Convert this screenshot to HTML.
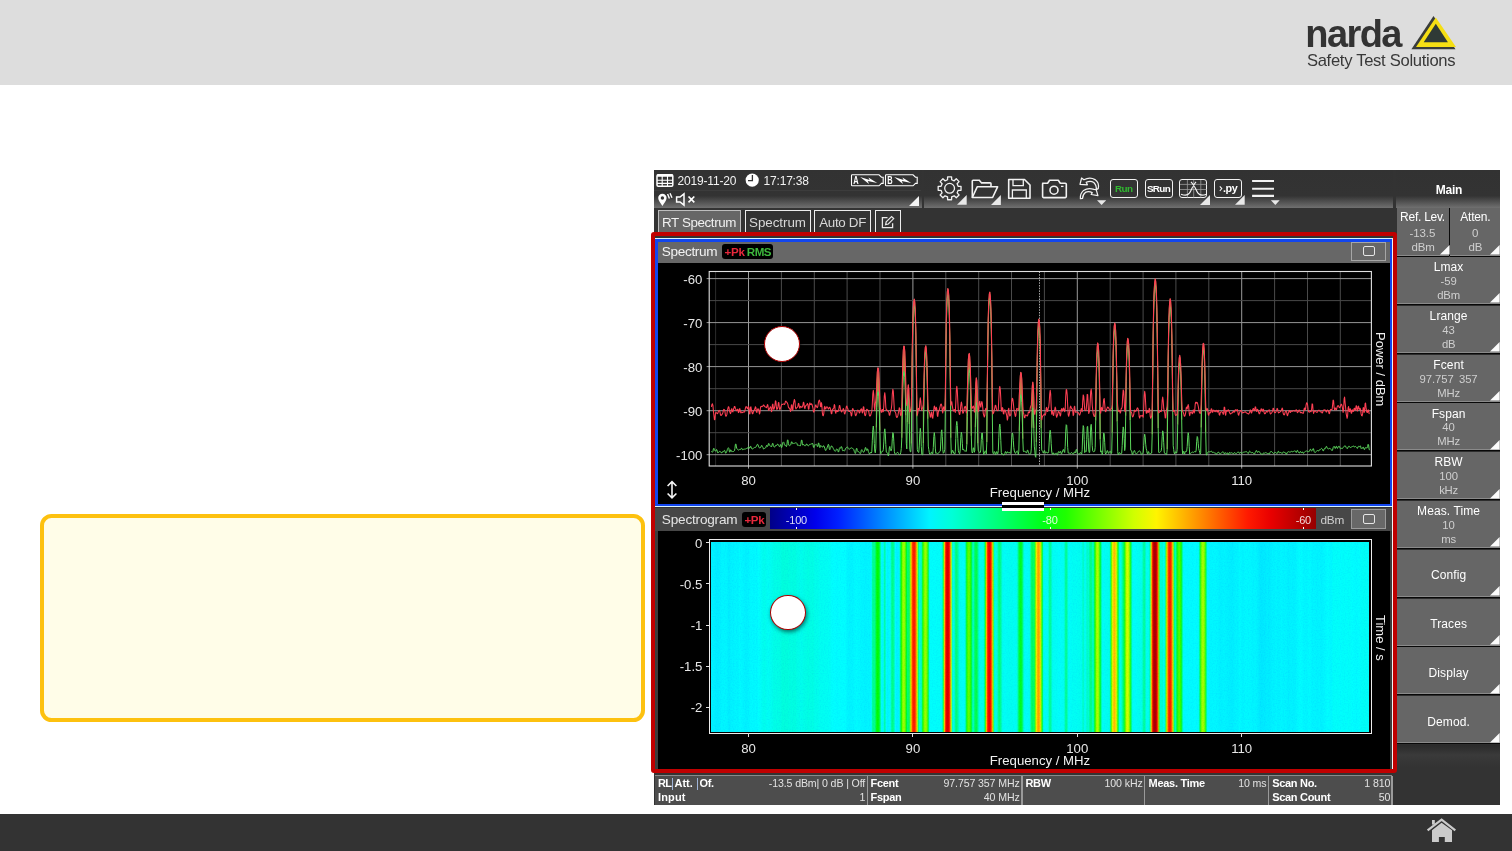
<!DOCTYPE html>
<html lang="en"><head><meta charset="utf-8"><title>Narda SignalShark - RT Spectrum</title>
<style>
html,body{margin:0;padding:0;}
body{width:1512px;height:851px;position:relative;overflow:hidden;background:#fff;font-family:"Liberation Sans", sans-serif;}
.a{position:absolute;box-sizing:border-box;}
.t{position:absolute;white-space:nowrap;font-family:"Liberation Sans", sans-serif;}
svg{position:absolute;overflow:visible;}
</style></head><body>
<div class="a" style="left:0.0px;top:0.0px;width:1512.0px;height:85.0px;background:#ddd;"></div>
<div class="a" style="left:0.0px;top:814.0px;width:1512.0px;height:37.0px;background:#333;"></div>
<div class="t" style="left:1305.3px;top:13px;font-size:38px;line-height:42px;color:#333;font-weight:700;letter-spacing:-1.6px;">narda</div>
<div class="t" style="left:1306.9px;top:51px;font-size:16.6px;line-height:19px;color:#383838;letter-spacing:-0.3px;">Safety Test Solutions</div>
<svg style="left:1408px;top:12px" width="52" height="42" viewBox="1408 12 52 42"><polygon points="1433.5,16 1455.5,49.3 1411.4,49.3" fill="#3a3d3a"/><polygon points="1435.8,17.4 1456,47 1416,47" fill="#f5df14"/><polygon points="1435.8,23.7 1447.9,42.2 1423.7,42.2" fill="#2f3a36"/></svg>
<svg style="left:1424px;top:816px" width="36" height="30" viewBox="1424 816 36 30"><path d="M1427.6 830.4 L1441.6 819.6 L1455.3 830.4" fill="none" stroke="#cbcbcb" stroke-width="2.2"/><path d="M1432 830.2 L1441.6 822.8 L1452 830.2 V842 H1444.8 V837.1 H1438.9 V842 H1432 Z" fill="#cbcbcb"/><rect x="1432" y="820" width="2.8" height="4.6" fill="#cbcbcb"/></svg>
<div class="a" style="left:39.7px;top:513.8px;width:605.4px;height:208.2px;background:#fffde8;border:4.2px solid #fdc10f;border-radius:11.5px;"></div>
<div class="a" style="left:654.0px;top:170.0px;width:846.0px;height:635.0px;background:#333;"></div>
<div class="a" style="left:654.0px;top:170.0px;width:267.7px;height:38.0px;background:linear-gradient(#323232 0,#333 68%,#707070 100%);"></div>
<div class="a" style="left:924.0px;top:170.0px;width:469.0px;height:38.0px;background:linear-gradient(#323232 0,#333 68%,#707070 100%);"></div>
<div class="a" style="left:1395.7px;top:170.0px;width:104.3px;height:38.0px;background:linear-gradient(#323232 0,#333 68%,#707070 100%);"></div>
<div class="a" style="left:654.0px;top:189.5px;width:267.0px;height:0.8px;background:#3c3c3c;"></div>
<svg style="left:655px;top:172px" width="20" height="16" viewBox="655 172 20 16"><rect x="657" y="174.7" width="15.8" height="11.6" rx="1.2" fill="none" stroke="#fff" stroke-width="1.5"/><rect x="657" y="174.2" width="15.8" height="2.6" rx="0.8" fill="#fff"/><path d="M657 180.2H673M657 183.4H673M662.2 176V186.5M667.5 176V186.5" stroke="#fff" stroke-width="1.1" fill="none"/></svg>
<div class="t" style="left:677.4px;top:174px;font-size:12px;line-height:14px;color:#f2f2f2;letter-spacing:-0.15px;">2019-11-20</div>
<svg style="left:744px;top:172px" width="16" height="16" viewBox="744 172 16 16"><circle cx="752.2" cy="180.1" r="6.6" fill="#fff"/><path d="M752.4 175V180.6H748" stroke="#333" stroke-width="1.3" fill="none"/></svg>
<div class="t" style="left:763.6px;top:174px;font-size:12px;line-height:14px;color:#f2f2f2;letter-spacing:-0.2px;">17:17:38</div>
<svg style="left:850.2px;top:173px" width="37" height="15" viewBox="850.2 173 37 15"><path d="M852.4000000000001 174.8 H879.2 L881.7 177.2 H883.4000000000001 V183.4 H881.7 L879.2 185.8 H852.4000000000001 Q851.7 185.8 851.7 185 V175.6 Q851.7 174.8 852.4000000000001 174.8Z" fill="none" stroke="#fff" stroke-width="1.1"/><path d="M860.4000000000001 177 L869.8000000000001 180 L868.6 177.4 L877.4000000000001 183 L868.0 180.9 L869.2 184 Z" fill="#fff"/><text x="853.4000000000001" y="184" font-family='"Liberation Sans", sans-serif' font-size="10" font-weight="700" fill="#fff" textLength="5.4" lengthAdjust="spacingAndGlyphs">A</text></svg>
<svg style="left:884px;top:173px" width="37" height="15" viewBox="884 173 37 15"><path d="M886.2 174.8 H913 L915.5 177.2 H917.2 V183.4 H915.5 L913 185.8 H886.2 Q885.5 185.8 885.5 185 V175.6 Q885.5 174.8 886.2 174.8Z" fill="none" stroke="#fff" stroke-width="1.1"/><path d="M894.2 177 L903.6 180 L902.4 177.4 L911.2 183 L901.8 180.9 L903 184 Z" fill="#fff"/><text x="887.2" y="184" font-family='"Liberation Sans", sans-serif' font-size="10" font-weight="700" fill="#fff" textLength="5.4" lengthAdjust="spacingAndGlyphs">B</text></svg>
<svg style="left:656px;top:192px" width="42" height="16" viewBox="656 192 42 16"><path d="M662.4 193.8 a4.2 4.2 0 0 1 4.2 4.2 c0 2.8 -2.7 5 -4.2 8 c-1.5 -3 -4.2 -5.2 -4.2 -8 a4.2 4.2 0 0 1 4.2 -4.2Z" fill="#fff"/><circle cx="662.4" cy="198" r="1.7" fill="#333"/><path d="M667.6 194 L669.4 198.4 M670 193.3 L672 197.8" stroke="#fff" stroke-width="1.4" fill="none"/><path d="M676.6 197 H680 L684 193.8 V205.2 L680 202 H676.6 Z" fill="none" stroke="#fff" stroke-width="1.5" stroke-linejoin="miter"/><path d="M688.5 196.5 L694.3 202.3 M694.3 196.5 L688.5 202.3" stroke="#fff" stroke-width="1.7" fill="none"/></svg>
<svg style="left:909.3px;top:196px" width="10" height="10" viewBox="0 0 10 10"><polygon points="10,0 10,10 0,10" fill="#f4f4f4"/></svg>
<div class="a" style="left:658.0px;top:210.4px;width:83.2px;height:25.6px;background:#666;border:1.3px solid #bdbdbd;border-bottom:none;"></div>
<div class="a" style="left:744.8px;top:210.4px;width:66.0px;height:25.6px;background:#333;border:1.3px solid #ededed;border-bottom:none;"></div>
<div class="a" style="left:814.0px;top:210.4px;width:57.2px;height:25.6px;background:#333;border:1.3px solid #ededed;border-bottom:none;"></div>
<div class="a" style="left:875.0px;top:210.4px;width:26.0px;height:25.6px;background:#333;border:1.3px solid #ededed;border-bottom:none;"></div>
<div class="t" style="left:662.0px;top:215px;font-size:13.4px;line-height:15px;color:#f0f0f0;letter-spacing:-0.4px;">RT Spectrum</div>
<div class="t" style="left:749.0px;top:215px;font-size:13.4px;line-height:15px;color:#d8d8d8;letter-spacing:-0.05px;">Spectrum</div>
<div class="t" style="left:819.2px;top:215px;font-size:13.4px;line-height:15px;color:#d8d8d8;letter-spacing:-0.33px;">Auto DF</div>
<svg style="left:880px;top:214px" width="16" height="16" viewBox="880 214 16 16"><path d="M887.5 217.6 H882.4 V227.6 H892.6 V223.2" fill="none" stroke="#e8e8e8" stroke-width="1.3"/><path d="M885.6 224.6 L886.2 221.9 L891.6 216.5 L893.7 218.6 L888.3 224 Z" fill="none" stroke="#e8e8e8" stroke-width="1.2"/></svg>
<svg style="left:934px;top:174px" width="36" height="34" viewBox="934 174 36 34"><path d="M947.61 176.87 L951.59 176.87 L951.65 179.74 L954.20 180.80 L956.27 178.81 L959.09 181.63 L957.10 183.70 L958.16 186.25 L961.03 186.31 L961.03 190.29 L958.16 190.35 L957.10 192.90 L959.09 194.97 L956.27 197.79 L954.20 195.80 L951.65 196.86 L951.59 199.73 L947.61 199.73 L947.55 196.86 L945.00 195.80 L942.93 197.79 L940.11 194.97 L942.10 192.90 L941.04 190.35 L938.17 190.29 L938.17 186.31 L941.04 186.25 L942.10 183.70 L940.11 181.63 L942.93 178.81 L945.00 180.80 L947.55 179.74Z" fill="none" stroke="#f2f2f2" stroke-width="1.3" stroke-linejoin="round"/><circle cx="949.6" cy="188.3" r="4.9" fill="none" stroke="#f2f2f2" stroke-width="1.3"/></svg>
<svg style="left:956.8px;top:195.20000000000002px" width="9.7" height="9.7" viewBox="0 0 9.7 9.7"><polygon points="9.7,0 9.7,9.7 0,9.7" fill="#e8e8e8"/></svg>
<svg style="left:969px;top:176px" width="34" height="26" viewBox="969 176 34 26"><path d="M972.3 197.5 V181 Q972.3 180.2 973.1 180.2 H979.3 L981.6 182.9 H990.2 Q991 182.9 991 183.7 V186.8" fill="none" stroke="#f2f2f2" stroke-width="1.6"/><path d="M972.3 197.5 L977.2 186.8 H997.6 L992.6 197.5 Z" fill="none" stroke="#f2f2f2" stroke-width="1.6" stroke-linejoin="round"/></svg>
<svg style="left:991.0px;top:195.0px" width="9.9" height="9.9" viewBox="0 0 9.9 9.9"><polygon points="9.9,0 9.9,9.9 0,9.9" fill="#e8e8e8"/></svg>
<svg style="left:1005px;top:176px" width="30" height="26" viewBox="1005 176 30 26"><path d="M1008.7 179.5 H1024.5 L1030 185 V198.3 H1008.7 Z" fill="none" stroke="#f2f2f2" stroke-width="1.6" stroke-linejoin="round"/><path d="M1013 179.8 V185.6 H1023.3 V179.8" fill="none" stroke="#f2f2f2" stroke-width="1.3"/><path d="M1012.4 198 V190 H1026.3 V198" fill="none" stroke="#f2f2f2" stroke-width="1.3"/></svg>
<svg style="left:1039px;top:176px" width="32" height="26" viewBox="1039 176 32 26"><path d="M1042.6 183.3 H1047.6 L1049.6 180.2 H1058.3 L1060.3 183.3 H1065.3 Q1066.3 183.3 1066.3 184.3 V196.6 Q1066.3 197.6 1065.3 197.6 H1043.6 Q1042.6 197.6 1042.6 196.6 V184.3 Q1042.6 183.3 1043.6 183.3Z" fill="none" stroke="#f2f2f2" stroke-width="1.6" stroke-linejoin="round"/><circle cx="1054" cy="190.2" r="4" fill="none" stroke="#f2f2f2" stroke-width="1.6"/><path d="M1061 186.4 H1063.5" stroke="#f2f2f2" stroke-width="1.3"/></svg>
<svg style="left:1076px;top:175px" width="32" height="32" viewBox="1076 175 32 32"><path d="M1080 184.4 L1081.6 178 L1083.9 179.7 Q1090 176.6 1095 179.6 Q1099.6 182.8 1098.2 188.6 L1096.2 189.7 Q1096.8 185.4 1093.8 182.5 Q1090.4 180.2 1086.2 182.3 L1087.4 184.8 Z" fill="none" stroke="#f2f2f2" stroke-width="1.25" stroke-linejoin="round"/><path d="M1080.4 198.7 Q1079.8 193.8 1083.6 190.4 Q1088 187.4 1094 189.4 L1096.2 189.7 L1097.9 195.6 L1091.2 194.5 L1092.2 192.6 Q1088.6 190.6 1085.4 192.4 Q1082.6 194.6 1082.6 198.3 Z" fill="none" stroke="#f2f2f2" stroke-width="1.25" stroke-linejoin="round"/><polygon points="1097,200.3 1106.2,200.3 1101.6,204.9" fill="#e8e8e8"/></svg>
<div class="a" style="left:1110.2px;top:179.1px;width:27.4px;height:19.2px;border:1.5px solid #f2f2f2;border-radius:3px;"></div>
<div class="a" style="left:1144.5px;top:179.1px;width:28.4px;height:19.2px;border:1.5px solid #f2f2f2;border-radius:3px;"></div>
<div class="a" style="left:1179.4px;top:179.1px;width:27.8px;height:19.2px;border:1.5px solid #f2f2f2;border-radius:3px;"></div>
<div class="a" style="left:1214.3px;top:179.1px;width:27.6px;height:19.2px;border:1.5px solid #f2f2f2;border-radius:3px;"></div>
<div class="t" style="left:1115.0px;top:183px;font-size:9.9px;line-height:11px;color:#30b830;font-weight:700;letter-spacing:-0.55px;">Run</div>
<div class="t" style="left:1146.9px;top:183px;font-size:9.9px;line-height:11px;color:#fff;font-weight:700;letter-spacing:-0.65px;">SRun</div>
<div class="t" style="left:1223.0px;top:182px;font-size:10.8px;line-height:12px;color:#fff;font-weight:700;letter-spacing:-0.45px;">.py</div>
<svg style="left:1217px;top:183px" width="10" height="12" viewBox="1217 183 10 12"><path d="M1219.8 186.3 L1221.8 188.6 L1219.8 191" fill="none" stroke="#f2f2f2" stroke-width="1.1"/></svg>
<svg style="left:1179px;top:179px" width="29" height="20" viewBox="1179 179 29 20"><path d="M1187.4 180V197.5M1193.7 180V197.5M1200.8 180V197.5M1180 184.4H1206.6M1180 189.5H1206.6" stroke="#9a9a9a" stroke-width="0.8" fill="none"/><path d="M1181 194.2 C1184 195.4 1187.6 195.6 1189.4 193.2 C1191.4 190.4 1192.4 186 1193.7 186 C1195 186 1196 190.4 1198 193.2 C1199.8 195.6 1203.4 195.4 1206.4 194.2" fill="none" stroke="#f2f2f2" stroke-width="1.2"/><path d="M1191 181.9 L1193.6 185 L1196 181.9" fill="none" stroke="#f2f2f2" stroke-width="1.1"/></svg>
<svg style="left:1200.1px;top:194.9px" width="10" height="10" viewBox="0 0 10 10"><polygon points="10,0 10,10 0,10" fill="#e8e8e8"/></svg>
<svg style="left:1235.0px;top:195.20000000000002px" width="9.7" height="9.7" viewBox="0 0 9.7 9.7"><polygon points="9.7,0 9.7,9.7 0,9.7" fill="#e8e8e8"/></svg>
<svg style="left:1250px;top:178px" width="32" height="28" viewBox="1250 178 32 28"><path d="M1252.1 181H1274M1252.1 188.8H1274M1252.1 195.9H1274" stroke="#f2f2f2" stroke-width="2.1"/><polygon points="1270.9,200.3 1279.7,200.3 1275.3,205" fill="#e8e8e8"/></svg>
<div class="t" style="left:1299.0px;width:300px;text-align:center;top:183px;font-size:12px;line-height:14px;color:#fff;font-weight:700;letter-spacing:-0.2px;">Main</div>
<div class="a" style="left:1396.7px;top:208.2px;width:102.9px;height:47.8px;background:#0a0a0a;"></div>
<div class="a" style="left:1396.7px;top:208.4px;width:52.3px;height:47.4px;background:#666;border-bottom:1px solid #8a8a8a;box-shadow:0 1.1px 0 #080808;"></div>
<svg style="left:1439.6000000000001px;top:245.0px" width="9.6" height="9.6" viewBox="0 0 9.6 9.6"><polygon points="9.6,0 9.6,9.6 0,9.6" fill="#fcfcfc"/></svg>
<div class="a" style="left:1450.1px;top:208.4px;width:49.5px;height:47.4px;background:#666;border-bottom:1px solid #8a8a8a;box-shadow:0 1.1px 0 #080808;"></div>
<svg style="left:1490.2px;top:245.0px" width="9.6" height="9.6" viewBox="0 0 9.6 9.6"><polygon points="9.6,0 9.6,9.6 0,9.6" fill="#fcfcfc"/></svg>
<div class="t" style="left:1272.5px;width:300px;text-align:center;top:210px;font-size:12px;line-height:14px;color:#fff;letter-spacing:-0.25px;">Ref. Lev.</div>
<div class="t" style="left:1272.4px;width:300px;text-align:center;top:227px;font-size:11.5px;line-height:12px;color:#cfcfcf;letter-spacing:-0.1px;">-13.5</div>
<div class="t" style="left:1273.2px;width:300px;text-align:center;top:241px;font-size:11.5px;line-height:12px;color:#cfcfcf;letter-spacing:-0.1px;">dBm</div>
<div class="t" style="left:1325.3px;width:300px;text-align:center;top:210px;font-size:12px;line-height:14px;color:#fff;letter-spacing:-0.25px;">Atten.</div>
<div class="t" style="left:1325.3px;width:300px;text-align:center;top:227px;font-size:11.5px;line-height:12px;color:#cfcfcf;">0</div>
<div class="t" style="left:1325.3px;width:300px;text-align:center;top:241px;font-size:11.5px;line-height:12px;color:#cfcfcf;letter-spacing:-0.2px;">dB</div>
<div class="a" style="left:1396.7px;top:257.0px;width:102.9px;height:47.1px;background:#666;border-bottom:1px solid #8a8a8a;box-shadow:0 1.1px 0 #080808;"></div>
<svg style="left:1490.2px;top:293.29999999999995px" width="9.6" height="9.6" viewBox="0 0 9.6 9.6"><polygon points="9.6,0 9.6,9.6 0,9.6" fill="#fcfcfc"/></svg>
<div class="t" style="left:1298.6px;width:300px;text-align:center;top:260px;font-size:12px;line-height:14px;color:#fff;letter-spacing:0.1px;">Lmax</div>
<div class="t" style="left:1298.6px;width:300px;text-align:center;top:275px;font-size:11.3px;line-height:12px;color:#cfcfcf;letter-spacing:-0.05px;word-spacing:2px;">-59</div>
<div class="t" style="left:1298.6px;width:300px;text-align:center;top:289px;font-size:11.3px;line-height:12px;color:#cfcfcf;letter-spacing:-0.2px;">dBm</div>
<div class="a" style="left:1396.7px;top:305.8px;width:102.9px;height:47.1px;background:#666;border-bottom:1px solid #8a8a8a;box-shadow:0 1.1px 0 #080808;"></div>
<svg style="left:1490.2px;top:342.09999999999997px" width="9.6" height="9.6" viewBox="0 0 9.6 9.6"><polygon points="9.6,0 9.6,9.6 0,9.6" fill="#fcfcfc"/></svg>
<div class="t" style="left:1298.6px;width:300px;text-align:center;top:309px;font-size:12px;line-height:14px;color:#fff;letter-spacing:0.1px;">Lrange</div>
<div class="t" style="left:1298.6px;width:300px;text-align:center;top:324px;font-size:11.3px;line-height:12px;color:#cfcfcf;letter-spacing:-0.05px;word-spacing:2px;">43</div>
<div class="t" style="left:1298.6px;width:300px;text-align:center;top:338px;font-size:11.3px;line-height:12px;color:#cfcfcf;letter-spacing:-0.2px;">dB</div>
<div class="a" style="left:1396.7px;top:354.6px;width:102.9px;height:47.1px;background:#666;border-bottom:1px solid #8a8a8a;box-shadow:0 1.1px 0 #080808;"></div>
<svg style="left:1490.2px;top:390.9px" width="9.6" height="9.6" viewBox="0 0 9.6 9.6"><polygon points="9.6,0 9.6,9.6 0,9.6" fill="#fcfcfc"/></svg>
<div class="t" style="left:1298.6px;width:300px;text-align:center;top:358px;font-size:12px;line-height:14px;color:#fff;letter-spacing:0.1px;">Fcent</div>
<div class="t" style="left:1298.6px;width:300px;text-align:center;top:373px;font-size:11.3px;line-height:12px;color:#cfcfcf;letter-spacing:-0.05px;word-spacing:2px;">97.757 357</div>
<div class="t" style="left:1298.6px;width:300px;text-align:center;top:387px;font-size:11.3px;line-height:12px;color:#cfcfcf;letter-spacing:-0.2px;">MHz</div>
<div class="a" style="left:1396.7px;top:403.4px;width:102.9px;height:47.1px;background:#666;border-bottom:1px solid #8a8a8a;box-shadow:0 1.1px 0 #080808;"></div>
<svg style="left:1490.2px;top:439.7px" width="9.6" height="9.6" viewBox="0 0 9.6 9.6"><polygon points="9.6,0 9.6,9.6 0,9.6" fill="#fcfcfc"/></svg>
<div class="t" style="left:1298.6px;width:300px;text-align:center;top:407px;font-size:12px;line-height:14px;color:#fff;letter-spacing:0.1px;">Fspan</div>
<div class="t" style="left:1298.6px;width:300px;text-align:center;top:421px;font-size:11.3px;line-height:12px;color:#cfcfcf;letter-spacing:-0.05px;word-spacing:2px;">40</div>
<div class="t" style="left:1298.6px;width:300px;text-align:center;top:435px;font-size:11.3px;line-height:12px;color:#cfcfcf;letter-spacing:-0.2px;">MHz</div>
<div class="a" style="left:1396.7px;top:452.2px;width:102.9px;height:47.1px;background:#666;border-bottom:1px solid #8a8a8a;box-shadow:0 1.1px 0 #080808;"></div>
<svg style="left:1490.2px;top:488.5px" width="9.6" height="9.6" viewBox="0 0 9.6 9.6"><polygon points="9.6,0 9.6,9.6 0,9.6" fill="#fcfcfc"/></svg>
<div class="t" style="left:1298.6px;width:300px;text-align:center;top:455px;font-size:12px;line-height:14px;color:#fff;letter-spacing:0.1px;">RBW</div>
<div class="t" style="left:1298.6px;width:300px;text-align:center;top:470px;font-size:11.3px;line-height:12px;color:#cfcfcf;letter-spacing:-0.05px;word-spacing:2px;">100</div>
<div class="t" style="left:1298.6px;width:300px;text-align:center;top:484px;font-size:11.3px;line-height:12px;color:#cfcfcf;letter-spacing:-0.2px;">kHz</div>
<div class="a" style="left:1396.7px;top:501.0px;width:102.9px;height:47.1px;background:#666;border-bottom:1px solid #8a8a8a;box-shadow:0 1.1px 0 #080808;"></div>
<svg style="left:1490.2px;top:537.3px" width="9.6" height="9.6" viewBox="0 0 9.6 9.6"><polygon points="9.6,0 9.6,9.6 0,9.6" fill="#fcfcfc"/></svg>
<div class="t" style="left:1298.6px;width:300px;text-align:center;top:504px;font-size:12px;line-height:14px;color:#fff;letter-spacing:0.1px;">Meas. Time</div>
<div class="t" style="left:1298.6px;width:300px;text-align:center;top:519px;font-size:11.3px;line-height:12px;color:#cfcfcf;letter-spacing:-0.05px;word-spacing:2px;">10</div>
<div class="t" style="left:1298.6px;width:300px;text-align:center;top:533px;font-size:11.3px;line-height:12px;color:#cfcfcf;letter-spacing:-0.2px;">ms</div>
<div class="a" style="left:1396.7px;top:549.8px;width:102.9px;height:47.1px;background:#666;border-bottom:1px solid #8a8a8a;box-shadow:0 1.1px 0 #080808;"></div>
<svg style="left:1490.2px;top:586.1px" width="9.6" height="9.6" viewBox="0 0 9.6 9.6"><polygon points="9.6,0 9.6,9.6 0,9.6" fill="#fcfcfc"/></svg>
<div class="t" style="left:1298.6px;width:300px;text-align:center;top:568px;font-size:12px;line-height:14px;color:#fff;letter-spacing:0.1px;">Config</div>
<div class="a" style="left:1396.7px;top:598.6px;width:102.9px;height:47.1px;background:#666;border-bottom:1px solid #8a8a8a;box-shadow:0 1.1px 0 #080808;"></div>
<svg style="left:1490.2px;top:634.9px" width="9.6" height="9.6" viewBox="0 0 9.6 9.6"><polygon points="9.6,0 9.6,9.6 0,9.6" fill="#fcfcfc"/></svg>
<div class="t" style="left:1298.6px;width:300px;text-align:center;top:617px;font-size:12px;line-height:14px;color:#fff;letter-spacing:0.1px;">Traces</div>
<div class="a" style="left:1396.7px;top:647.4px;width:102.9px;height:47.1px;background:#666;border-bottom:1px solid #8a8a8a;box-shadow:0 1.1px 0 #080808;"></div>
<svg style="left:1490.2px;top:683.6999999999999px" width="9.6" height="9.6" viewBox="0 0 9.6 9.6"><polygon points="9.6,0 9.6,9.6 0,9.6" fill="#fcfcfc"/></svg>
<div class="t" style="left:1298.6px;width:300px;text-align:center;top:666px;font-size:12px;line-height:14px;color:#fff;letter-spacing:0.1px;">Display</div>
<div class="a" style="left:1396.7px;top:696.2px;width:102.9px;height:47.1px;background:#666;border-bottom:1px solid #8a8a8a;box-shadow:0 1.1px 0 #080808;"></div>
<svg style="left:1490.2px;top:732.4999999999999px" width="9.6" height="9.6" viewBox="0 0 9.6 9.6"><polygon points="9.6,0 9.6,9.6 0,9.6" fill="#fcfcfc"/></svg>
<div class="t" style="left:1298.6px;width:300px;text-align:center;top:715px;font-size:12px;line-height:14px;color:#fff;letter-spacing:0.1px;">Demod.</div>
<div class="a" style="left:1396.7px;top:744.5px;width:102.9px;height:60.5px;background:linear-gradient(#2a2a2a 0,#3a3a3a 10px,#333 22px,#333 100%);"></div>
<div class="a" style="left:655.0px;top:237.8px;width:738.0px;height:269.2px;background:#d8f4ff;"></div>
<div class="a" style="left:655.0px;top:239.1px;width:737.2px;height:267.1px;background:#1246ee;"></div>
<div class="a" style="left:658.0px;top:242.0px;width:731.8px;height:262.2px;background:#000;"></div>
<div class="a" style="left:658.0px;top:242.0px;width:731.8px;height:20.8px;background:#676767;"></div>
<div class="t" style="left:661.8px;top:244px;font-size:13.6px;line-height:15px;color:#f2f2f2;letter-spacing:-0.35px;">Spectrum</div>
<div class="a" style="left:721.6px;top:244.0px;width:51.6px;height:14.8px;background:#000;border-radius:3px;"></div>
<div class="t" style="left:724.6px;top:246px;font-size:11.6px;line-height:12px;color:#e8283c;font-weight:700;letter-spacing:-0.3px;">+Pk</div>
<div class="t" style="left:746.8px;top:246px;font-size:11.6px;line-height:12px;color:#3db83d;font-weight:700;letter-spacing:-0.5px;">RMS</div>
<div class="a" style="left:1351.3px;top:242.0px;width:34.5px;height:18.8px;border:1px solid #a6a6a6;"></div>
<div class="a" style="left:1362.9px;top:245.8px;width:12.1px;height:10.2px;border:1.4px solid #e6e6e6;border-radius:2px;"></div>
<svg style="left:700px;top:265px" width="680" height="210" viewBox="700 265 680 210"><path d="M715.6 271.5V466.0" stroke="#2c2c2c" stroke-width="1"/><path d="M748.5 271.5V468.6" stroke="#9a9a9a" stroke-width="1"/><path d="M781.4 271.5V466.0" stroke="#4a4a4a" stroke-width="1"/><path d="M814.3 271.5V466.0" stroke="#4a4a4a" stroke-width="1"/><path d="M847.1 271.5V466.0" stroke="#4a4a4a" stroke-width="1"/><path d="M880.0 271.5V466.0" stroke="#4a4a4a" stroke-width="1"/><path d="M912.9 271.5V468.6" stroke="#9a9a9a" stroke-width="1"/><path d="M945.8 271.5V466.0" stroke="#4a4a4a" stroke-width="1"/><path d="M978.7 271.5V466.0" stroke="#4a4a4a" stroke-width="1"/><path d="M1011.5 271.5V466.0" stroke="#4a4a4a" stroke-width="1"/><path d="M1044.4 271.5V466.0" stroke="#4a4a4a" stroke-width="1"/><path d="M1077.3 271.5V468.6" stroke="#9a9a9a" stroke-width="1"/><path d="M1110.2 271.5V466.0" stroke="#4a4a4a" stroke-width="1"/><path d="M1143.1 271.5V466.0" stroke="#4a4a4a" stroke-width="1"/><path d="M1175.9 271.5V466.0" stroke="#4a4a4a" stroke-width="1"/><path d="M1208.8 271.5V466.0" stroke="#4a4a4a" stroke-width="1"/><path d="M1241.7 271.5V468.6" stroke="#9a9a9a" stroke-width="1"/><path d="M1274.6 271.5V466.0" stroke="#4a4a4a" stroke-width="1"/><path d="M1307.5 271.5V466.0" stroke="#4a4a4a" stroke-width="1"/><path d="M1340.3 271.5V466.0" stroke="#4a4a4a" stroke-width="1"/><path d="M706.6 278.6H1371.4" stroke="#959595" stroke-width="1"/><path d="M709.2 300.6H1371.4" stroke="#484848" stroke-width="1"/><path d="M706.6 322.6H1371.4" stroke="#959595" stroke-width="1"/><path d="M709.2 344.6H1371.4" stroke="#484848" stroke-width="1"/><path d="M706.6 366.6H1371.4" stroke="#959595" stroke-width="1"/><path d="M709.2 388.7H1371.4" stroke="#484848" stroke-width="1"/><path d="M706.6 410.7H1371.4" stroke="#959595" stroke-width="1"/><path d="M709.2 432.7H1371.4" stroke="#484848" stroke-width="1"/><path d="M706.6 454.7H1371.4" stroke="#959595" stroke-width="1"/><path d="M1039.5 271.5V466.0" stroke="#a8a8a8" stroke-width="1" stroke-dasharray="1.5 1.2"/><rect x="709.2" y="271.5" width="662.2" height="194.5" fill="none" stroke="#e0e0e0" stroke-width="1.1"/><path d="M876.3 394.3 L876.8 382.1 L877.3 372.1 L877.8 367.9 L878.3 368.1 L878.8 373.0 L879.3 384.3 L879.8 400.1 L879.8 430.6 L879.3 409.2 L878.8 396.9 L878.3 391.8 L877.8 391.7 L877.3 396.2 L876.8 407.4 L876.3 427.7ZM901.8 406.7 L902.3 382.1 L902.8 361.1 L903.3 350.3 L903.8 346.0 L904.3 346.4 L904.8 351.6 L905.3 363.9 L905.8 385.9 L905.8 415.5 L905.3 391.0 L904.8 377.6 L904.3 372.2 L903.8 371.6 L903.3 376.2 L902.8 387.7 L902.3 410.2 L901.8 437.8ZM907.3 402.5 L907.8 390.0 L908.3 384.8 L908.8 389.2 L909.3 403.5 L909.3 424.0 L908.8 401.1 L908.3 394.5 L907.8 400.4 L907.3 422.4ZM911.3 405.7 L911.8 385.1 L912.3 346.4 L912.8 320.4 L913.3 307.3 L913.8 301.3 L914.3 299.1 L914.8 302.2 L915.3 310.4 L915.8 328.8 L916.3 361.1 L916.8 402.1 L916.8 416.6 L916.3 368.3 L915.8 335.9 L915.3 317.6 L914.8 309.2 L914.3 305.8 L913.8 307.4 L913.3 313.6 L912.8 328.0 L912.3 354.7 L911.8 397.3 L911.3 443.7ZM923.3 404.9 L923.8 390.4 L924.3 367.6 L924.8 352.7 L925.3 347.3 L925.8 345.7 L926.3 348.6 L926.8 357.5 L927.3 376.1 L927.8 400.9 L927.8 418.8 L927.3 385.4 L926.8 365.1 L926.3 355.6 L925.8 352.0 L925.3 354.1 L924.8 361.0 L924.3 377.3 L923.8 406.9 L923.3 443.4ZM945.3 397.1 L945.8 353.7 L946.3 320.6 L946.8 301.4 L947.3 292.1 L947.8 288.5 L948.3 290.1 L948.8 295.8 L949.3 308.9 L949.8 334.4 L950.3 374.6 L950.8 405.4 L950.8 437.8 L950.3 383.8 L949.8 341.7 L949.3 315.7 L948.8 301.7 L948.3 295.9 L947.8 294.9 L947.3 298.6 L946.8 307.5 L946.3 326.6 L945.8 360.2 L945.3 410.6ZM966.8 410.8 L967.3 393.5 L967.8 372.9 L968.3 360.1 L968.8 354.5 L969.3 353.4 L969.8 357.2 L970.3 366.7 L970.8 385.4 L971.3 403.6 L971.3 435.9 L970.8 405.7 L970.3 384.2 L969.8 373.7 L969.3 369.5 L968.8 370.2 L968.3 376.1 L967.8 390.4 L967.3 416.4 L966.8 444.4ZM975.3 398.2 L975.8 383.2 L976.3 377.8 L976.8 380.5 L977.3 391.1 L977.8 405.7 L977.8 443.4 L977.3 419.6 L976.8 405.8 L976.3 402.6 L975.8 408.9 L975.3 427.4ZM986.8 409.0 L987.3 381.2 L987.8 341.4 L988.3 315.0 L988.8 300.6 L989.3 294.0 L989.8 292.1 L990.3 295.8 L990.8 304.7 L991.3 323.1 L991.8 355.3 L992.3 397.6 L992.3 412.0 L991.8 362.4 L991.3 329.7 L990.8 311.2 L990.3 302.4 L989.8 298.7 L989.3 300.4 L988.8 306.8 L988.3 321.0 L987.8 347.4 L987.3 390.4 L986.8 442.1ZM1019.3 396.0 L1019.8 384.6 L1020.3 375.7 L1020.8 372.2 L1021.3 373.7 L1021.8 379.5 L1022.3 391.8 L1022.8 406.8 L1022.8 438.8 L1022.3 416.9 L1021.8 402.4 L1021.3 396.0 L1020.8 394.6 L1020.3 398.9 L1019.8 410.3 L1019.3 430.8ZM1031.8 395.9 L1032.3 386.0 L1032.8 382.1 L1033.3 385.7 L1033.8 398.0 L1033.8 428.1 L1033.3 412.9 L1032.8 408.0 L1032.3 412.7 L1031.8 427.8ZM1036.3 408.4 L1036.8 384.1 L1037.3 351.1 L1037.8 331.1 L1038.3 322.4 L1038.8 319.1 L1039.3 320.9 L1039.8 327.7 L1040.3 343.8 L1040.7 372.9 L1041.2 409.0 L1041.2 428.0 L1040.7 383.5 L1040.3 353.1 L1039.8 336.7 L1039.3 329.3 L1038.8 326.7 L1038.3 330.2 L1037.8 340.1 L1037.3 360.8 L1036.8 396.7 L1036.3 442.2ZM1095.7 403.0 L1096.2 377.4 L1096.7 357.6 L1097.2 346.9 L1097.7 342.9 L1098.2 344.9 L1098.7 351.3 L1099.2 365.7 L1099.7 390.0 L1100.2 411.4 L1100.2 439.4 L1099.7 402.1 L1099.2 373.8 L1098.7 358.5 L1098.2 351.9 L1097.7 350.4 L1097.2 354.3 L1096.7 364.5 L1096.2 385.9 L1095.7 420.6ZM1112.2 404.7 L1112.7 379.9 L1113.2 351.4 L1113.7 334.3 L1114.2 326.3 L1114.7 323.0 L1115.2 324.8 L1115.7 331.3 L1116.2 346.2 L1116.7 371.7 L1117.2 398.8 L1117.2 421.5 L1116.7 380.3 L1116.2 352.9 L1115.7 338.0 L1115.2 331.5 L1114.7 329.5 L1114.2 332.8 L1113.7 341.0 L1113.2 358.7 L1112.7 389.9 L1112.2 432.5ZM1125.7 400.0 L1126.2 373.4 L1126.7 353.3 L1127.2 342.3 L1127.7 338.2 L1128.2 339.6 L1128.7 344.1 L1129.2 353.9 L1129.7 374.6 L1130.2 400.9 L1130.2 420.1 L1129.7 384.2 L1129.2 361.4 L1128.7 349.7 L1128.2 344.9 L1127.7 344.4 L1127.2 348.9 L1126.7 360.0 L1126.2 381.5 L1125.7 415.8ZM1152.2 407.6 L1152.7 371.4 L1153.2 330.9 L1153.7 304.2 L1154.2 289.5 L1154.7 282.3 L1155.2 278.9 L1155.7 281.1 L1156.2 287.3 L1156.7 301.2 L1157.2 326.5 L1157.7 365.9 L1158.2 405.4 L1158.2 428.2 L1157.7 373.8 L1157.2 333.2 L1156.7 307.5 L1156.2 293.5 L1155.7 287.1 L1155.2 284.7 L1154.7 287.5 L1154.2 294.5 L1153.7 309.8 L1153.2 336.9 L1152.7 379.6 L1152.2 434.4ZM1167.2 406.1 L1167.7 391.5 L1168.2 354.1 L1168.7 325.4 L1169.2 309.0 L1169.7 301.5 L1170.2 298.7 L1170.7 301.8 L1171.2 309.6 L1171.7 326.2 L1172.2 355.6 L1172.7 395.8 L1172.7 408.9 L1172.2 363.3 L1171.7 333.6 L1171.2 317.2 L1170.7 309.8 L1170.2 306.9 L1169.7 309.9 L1169.2 317.2 L1168.7 333.2 L1168.2 362.5 L1167.7 408.0 L1167.2 449.1ZM1177.7 403.4 L1178.2 382.3 L1178.7 365.8 L1179.2 358.2 L1179.7 355.3 L1180.2 358.0 L1180.7 365.2 L1181.2 380.4 L1181.7 400.3 L1181.7 419.8 L1181.2 390.3 L1180.7 373.3 L1180.2 365.7 L1179.7 363.1 L1179.2 366.4 L1178.7 375.2 L1178.2 394.0 L1177.7 424.7ZM1201.2 404.2 L1201.7 381.2 L1202.2 359.8 L1202.7 348.2 L1203.2 343.3 L1203.7 343.6 L1204.2 349.1 L1204.7 361.9 L1205.2 384.6 L1205.7 406.6 L1205.7 431.9 L1205.2 394.5 L1204.7 369.2 L1204.2 356.1 L1203.7 350.6 L1203.2 350.3 L1202.7 355.2 L1202.2 367.1 L1201.7 390.8 L1201.2 427.6Z" fill="#c8984c" stroke="#c8984c" stroke-width="0.6" opacity="0.9"/><path d="M711.4 451.5L711.9 451.5L712.4 452.3L712.9 451.6L713.4 448.8L713.9 448.2L714.4 449.9L714.9 450.6L715.4 451.2L715.9 451.0L716.4 449.5L716.9 449.8L717.4 452.3L717.9 453.0L718.4 452.6L718.9 452.2L719.4 451.4L719.9 451.2L720.4 451.7L720.9 452.1L721.4 452.9L721.9 452.9L722.4 451.8L722.9 451.5L723.4 451.6L723.9 451.3L724.4 450.3L724.9 450.7L725.4 452.9L725.9 453.3L726.4 452.3L726.9 451.2L727.4 449.4L727.9 448.4L728.4 447.7L728.9 448.5L729.4 451.8L729.9 452.2L730.4 450.0L730.9 449.8L731.4 451.3L731.9 451.8L732.4 451.6L732.9 451.5L733.4 451.5L733.9 451.3L734.4 450.8L734.9 448.7L735.4 444.3L735.9 443.9L736.4 447.0L736.9 448.7L737.4 449.3L737.9 449.6L738.4 450.0L738.9 450.0L739.4 449.6L739.9 449.4L740.4 449.5L740.9 449.2L741.4 448.2L741.9 448.4L742.4 449.7L742.9 449.9L743.4 449.3L743.9 449.1L744.4 449.1L744.9 449.1L745.4 449.0L745.9 448.8L746.4 448.5L746.9 448.3L747.4 448.3L747.9 447.9L748.4 446.8L748.9 446.8L749.4 448.2L749.9 448.0L750.4 446.4L750.9 446.4L751.4 448.2L751.9 448.9L752.4 449.0L752.9 448.8L753.4 448.2L753.9 447.8L754.4 447.6L754.9 447.4L755.4 447.5L755.9 447.1L756.4 446.1L756.9 445.2L757.4 444.3L757.9 444.5L758.4 446.1L758.9 447.1L759.4 447.9L759.9 448.0L760.4 447.7L760.9 447.1L761.4 445.6L761.9 445.4L762.4 446.5L762.9 447.4L763.4 448.9L763.9 449.1L764.4 448.5L764.9 448.2L765.4 448.0L765.9 447.3L766.4 445.6L766.9 445.3L767.4 446.5L767.9 446.1L768.4 443.7L768.9 443.4L769.4 444.9L769.9 445.6L770.4 446.1L770.9 446.4L771.4 446.9L771.9 446.0L772.4 443.5L772.9 443.3L773.4 445.6L773.9 446.7L774.4 447.2L774.9 446.9L775.4 445.5L775.9 445.1L776.4 445.6L776.9 445.3L777.4 444.1L777.9 444.1L778.4 445.3L778.9 445.8L779.4 446.7L779.9 446.3L780.4 444.5L780.9 445.0L781.4 447.6L781.9 447.3L782.4 443.8L782.9 442.4L783.4 441.9L783.9 442.5L784.4 444.9L784.9 445.5L785.4 445.3L785.9 445.6L786.4 446.7L786.9 445.1L787.4 440.2L787.9 439.8L788.4 443.4L788.9 445.3L789.4 445.6L789.9 445.6L790.4 445.2L790.9 444.3L791.4 442.0L791.9 441.7L792.4 443.4L792.9 443.9L793.4 443.5L793.9 443.3L794.4 443.3L794.9 443.2L795.4 442.9L795.9 442.8L796.4 442.8L796.9 443.4L797.4 445.1L797.9 445.6L798.4 445.1L798.9 445.1L799.4 445.6L799.9 445.8L800.4 445.8L800.9 444.1L801.4 440.2L801.9 440.1L802.4 443.8L802.9 445.2L803.4 444.5L803.9 444.6L804.4 445.5L804.9 445.9L805.4 445.8L805.9 445.3L806.4 444.0L806.9 444.0L807.4 445.2L807.9 445.7L808.4 445.8L808.9 445.5L809.4 444.6L809.9 444.3L810.4 444.3L810.9 444.2L811.4 444.0L811.9 443.6L812.4 443.1L812.9 444.0L813.4 447.1L813.9 447.6L814.4 445.3L814.9 444.6L815.4 444.8L815.9 444.7L816.4 444.3L816.9 444.8L817.4 446.7L817.9 446.2L818.4 443.0L818.9 443.2L819.4 446.9L819.9 447.6L820.4 445.8L820.9 445.4L821.3 446.1L821.8 446.6L822.3 447.2L822.8 447.0L823.3 445.8L823.8 445.8L824.3 447.0L824.8 448.1L825.3 450.2L825.8 450.6L826.3 449.5L826.8 448.7L827.3 447.1L827.8 446.0L828.3 444.3L828.8 445.1L829.3 448.8L829.8 449.7L830.3 448.3L830.8 447.4L831.3 446.0L831.8 445.9L832.3 446.8L832.8 447.5L833.3 448.5L833.8 449.3L834.3 450.4L834.8 451.0L835.3 451.4L835.8 450.9L836.3 449.3L836.8 448.9L837.3 449.3L837.8 450.2L838.3 452.1L838.8 451.4L839.3 448.5L839.8 447.7L840.3 448.3L840.8 448.0L841.3 446.5L841.8 447.0L842.3 449.6L842.8 450.8L843.3 450.5L843.8 450.6L844.3 451.1L844.8 450.7L845.3 449.0L845.8 448.2L846.3 447.6L846.8 447.3L847.3 446.9L847.8 447.3L848.3 448.7L848.8 449.2L849.3 449.2L849.8 449.0L850.3 448.4L850.8 448.1L851.3 447.9L851.8 447.9L852.3 448.3L852.8 448.5L853.3 448.8L853.8 449.6L854.3 451.4L854.8 452.5L855.3 453.5L855.8 452.3L856.3 448.7L856.8 448.2L857.3 450.5L857.8 451.5L858.3 451.5L858.8 451.8L859.3 452.7L859.8 453.1L860.3 453.6L860.8 452.8L861.3 450.2L861.8 449.6L862.3 450.6L862.8 451.2L863.3 452.2L863.8 452.2L864.3 451.4L864.8 450.0L865.3 447.6L865.8 447.6L866.3 449.9L866.8 450.5L867.3 448.9L867.8 449.1L868.3 451.4L868.8 452.6L869.3 453.8L869.8 453.8L870.3 452.6L870.8 452.4L871.3 453.1L871.8 451.9L872.3 440.8L872.8 429.3L873.3 426.0L873.8 430.9L874.3 443.5L874.8 451.6L875.3 452.8L875.8 448.1L876.3 427.7L876.8 407.4L877.3 396.2L877.8 391.7L878.3 391.8L878.8 396.9L879.3 409.2L879.8 430.6L880.3 450.2L880.8 453.8L881.3 452.3L881.8 451.6L882.3 451.6L882.8 451.3L883.3 449.7L883.8 441.9L884.3 432.1L884.8 428.8L885.3 433.2L885.8 444.6L886.3 452.0L886.8 452.6L887.3 452.8L887.8 453.6L888.3 455.9L888.8 454.1L889.3 447.9L889.8 446.4L890.3 449.2L890.8 450.7L891.3 450.7L891.8 448.4L892.3 438.7L892.8 432.6L893.3 433.3L893.8 441.2L894.3 451.3L894.8 453.4L895.3 454.3L895.8 454.3L896.3 453.4L896.8 452.9L897.3 452.3L897.8 452.3L898.3 453.2L898.8 453.8L899.3 454.7L899.8 454.7L900.3 454.1L900.8 452.3L901.3 448.5L901.8 437.8L902.3 410.2L902.8 387.7L903.3 376.2L903.8 371.6L904.3 372.2L904.8 377.6L905.3 391.0L905.8 415.5L906.3 443.4L906.8 448.9L907.3 422.4L907.8 400.4L908.3 394.5L908.8 401.1L909.3 424.0L909.8 449.5L910.3 451.8L910.8 451.8L911.3 443.7L911.8 397.3L912.3 354.7L912.8 328.0L913.3 313.6L913.8 307.4L914.3 305.8L914.8 309.2L915.3 317.6L915.8 335.9L916.3 368.3L916.8 416.6L917.3 449.6L917.8 451.6L918.3 452.3L918.8 452.4L919.3 445.9L919.8 433.3L920.3 428.3L920.8 432.7L921.3 446.4L921.8 454.4L922.3 455.0L922.8 454.6L923.3 443.4L923.8 406.9L924.3 377.3L924.8 361.0L925.3 354.1L925.8 352.0L926.3 355.6L926.8 365.1L927.3 385.4L927.8 418.8L928.3 446.1L928.8 449.6L929.3 452.7L929.8 454.1L930.3 454.6L930.8 454.0L931.3 452.2L931.8 452.1L932.3 453.6L932.8 453.8L933.3 447.4L933.8 436.7L934.3 432.6L934.8 436.8L935.3 448.1L935.8 453.4L936.3 453.1L936.8 453.1L937.3 453.4L937.8 453.5L938.3 453.3L938.8 452.9L939.3 451.9L939.8 451.6L940.3 451.1L940.8 441.9L941.3 431.8L941.8 429.8L942.3 436.5L942.8 449.8L943.3 453.3L943.8 452.8L944.3 451.8L944.8 449.2L945.3 410.6L945.8 360.2L946.3 326.6L946.8 307.5L947.3 298.6L947.8 294.9L948.3 295.9L948.8 301.7L949.3 315.7L949.8 341.7L950.3 383.8L950.8 437.8L951.3 453.6L951.8 452.6L952.3 450.5L952.8 450.4L953.3 452.0L953.8 453.1L954.3 453.9L954.8 454.0L955.3 451.6L955.8 438.4L956.3 425.7L956.8 421.4L957.3 425.7L957.8 438.7L958.3 450.5L958.8 452.2L959.3 453.5L959.8 453.6L960.3 448.9L960.8 437.6L961.3 432.2L961.8 434.3L962.3 443.3L962.8 450.0L963.3 449.3L963.8 449.4L964.3 450.7L964.8 451.3L965.3 451.0L965.8 451.1L966.3 451.4L966.8 444.4L967.3 416.4L967.8 390.4L968.3 376.1L968.8 370.2L969.3 369.5L969.8 373.7L970.3 384.2L970.8 405.7L971.3 435.9L971.8 450.9L972.3 453.0L972.8 451.6L973.3 447.8L973.8 448.0L974.3 452.3L974.8 450.6L975.3 427.4L975.8 408.9L976.3 402.6L976.8 405.8L977.3 419.6L977.8 443.4L978.3 450.9L978.8 451.3L979.3 452.6L979.8 452.9L980.3 452.5L980.8 449.9L981.3 439.6L981.8 433.0L982.3 433.0L982.8 440.7L983.3 452.2L983.8 454.5L984.3 453.0L984.8 452.0L985.3 450.8L985.8 451.4L986.3 453.9L986.8 442.1L987.3 390.4L987.8 347.4L988.3 321.0L988.8 306.8L989.3 300.4L989.8 298.7L990.3 302.4L990.8 311.2L991.3 329.7L991.8 362.4L992.3 412.0L992.8 452.6L993.3 453.7L993.8 452.6L994.3 451.5L994.8 452.0L995.3 454.5L995.8 454.5L996.3 451.9L996.8 451.6L997.3 453.5L997.8 453.8L998.3 450.6L998.8 437.8L999.3 427.1L999.8 424.1L1000.3 428.3L1000.8 440.5L1001.3 452.6L1001.8 454.3L1002.3 453.9L1002.8 454.1L1003.3 454.8L1003.8 455.0L1004.3 454.7L1004.8 453.8L1005.3 451.7L1005.8 451.6L1006.3 453.2L1006.8 453.3L1007.3 451.9L1007.8 451.8L1008.3 452.8L1008.8 453.0L1009.3 452.5L1009.8 452.6L1010.3 453.5L1010.8 453.0L1011.3 447.0L1011.8 437.6L1012.3 432.9L1012.8 434.1L1013.3 440.3L1013.8 447.7L1014.3 451.0L1014.8 452.4L1015.3 453.4L1015.8 453.2L1016.3 451.7L1016.8 451.1L1017.3 450.8L1017.8 451.7L1018.3 454.6L1018.8 451.3L1019.3 430.8L1019.8 410.3L1020.3 398.9L1020.8 394.6L1021.3 396.0L1021.8 402.4L1022.3 416.9L1022.8 438.8L1023.3 450.9L1023.8 451.8L1024.3 451.3L1024.8 451.2L1025.3 451.5L1025.8 451.9L1026.3 452.9L1026.8 452.5L1027.3 450.2L1027.8 450.2L1028.3 452.2L1028.8 453.2L1029.3 454.1L1029.8 454.3L1030.3 454.0L1030.8 453.6L1031.3 448.9L1031.8 427.8L1032.3 412.7L1032.8 408.0L1033.3 412.9L1033.8 428.1L1034.3 446.2L1034.8 450.9L1035.3 456.3L1035.8 457.3L1036.3 442.2L1036.8 396.7L1037.3 360.8L1037.8 340.1L1038.3 330.2L1038.8 326.7L1039.3 329.3L1039.8 336.7L1040.3 353.1L1040.7 383.5L1041.2 428.0L1041.7 449.9L1042.2 450.8L1042.7 451.3L1043.2 453.0L1043.7 453.0L1044.2 450.6L1044.7 450.6L1045.2 452.8L1045.7 453.2L1046.2 452.1L1046.7 452.0L1047.2 452.7L1047.7 453.0L1048.2 452.8L1048.7 451.4L1049.2 442.1L1049.7 432.9L1050.2 430.2L1050.7 434.4L1051.2 443.7L1051.7 451.0L1052.2 454.0L1052.7 454.3L1053.2 452.9L1053.7 453.0L1054.2 454.4L1054.7 454.6L1055.2 453.7L1055.7 453.3L1056.2 453.1L1056.7 453.5L1057.2 455.1L1057.7 454.7L1058.2 452.0L1058.7 451.5L1059.2 452.8L1059.7 452.7L1060.2 451.4L1060.7 451.6L1061.2 453.7L1061.7 453.8L1062.2 452.0L1062.7 450.9L1063.2 449.5L1063.7 449.7L1064.2 451.8L1064.7 452.5L1065.2 446.3L1065.7 431.8L1066.2 424.7L1066.7 425.3L1067.2 433.3L1067.7 447.5L1068.2 453.0L1068.7 453.2L1069.2 453.2L1069.7 453.3L1070.2 453.7L1070.7 453.5L1071.2 452.6L1071.7 452.5L1072.2 453.3L1072.7 453.7L1073.2 454.2L1073.7 453.8L1074.2 452.1L1074.7 451.9L1075.2 452.9L1075.7 452.2L1076.2 449.5L1076.7 449.5L1077.2 452.3L1077.7 453.5L1078.2 454.0L1078.7 454.1L1079.2 453.9L1079.7 453.5L1080.2 452.6L1080.7 452.7L1081.2 453.7L1081.7 454.2L1082.2 449.8L1082.7 433.7L1083.2 425.6L1083.7 427.3L1084.2 439.6L1084.7 452.6L1085.2 451.3L1085.7 450.9L1086.2 451.5L1086.7 439.5L1087.2 426.7L1087.7 426.3L1088.2 437.3L1088.7 449.9L1089.2 452.6L1089.7 452.3L1090.2 440.0L1090.7 427.0L1091.2 424.3L1091.7 431.1L1092.2 445.5L1092.7 450.8L1093.2 451.6L1093.7 451.7L1094.2 451.6L1094.7 451.2L1095.2 447.3L1095.7 420.6L1096.2 385.9L1096.7 364.5L1097.2 354.3L1097.7 350.4L1098.2 351.9L1098.7 358.5L1099.2 373.8L1099.7 402.1L1100.2 439.4L1100.7 452.1L1101.2 450.8L1101.7 451.4L1102.2 454.6L1102.7 452.6L1103.2 439.9L1103.7 432.9L1104.2 433.9L1104.7 442.3L1105.2 452.7L1105.7 454.1L1106.2 453.1L1106.7 452.2L1107.2 450.5L1107.7 450.8L1108.2 453.1L1108.7 453.4L1109.2 452.1L1109.7 451.5L1110.2 451.1L1110.7 451.7L1111.2 453.7L1111.7 453.1L1112.2 432.5L1112.7 389.9L1113.2 358.7L1113.7 341.0L1114.2 332.8L1114.7 329.5L1115.2 331.5L1115.7 338.0L1116.2 352.9L1116.7 380.3L1117.2 421.5L1117.7 451.7L1118.2 454.7L1118.7 454.4L1119.2 452.8L1119.7 452.6L1120.2 453.4L1120.7 453.7L1121.2 453.8L1121.7 453.4L1122.2 445.5L1122.7 432.5L1123.2 426.9L1123.7 428.9L1124.2 438.5L1124.7 450.6L1125.2 447.2L1125.7 415.8L1126.2 381.5L1126.7 360.0L1127.2 348.9L1127.7 344.4L1128.2 344.9L1128.7 349.7L1129.2 361.4L1129.7 384.2L1130.2 420.1L1130.7 450.1L1131.2 450.7L1131.7 450.8L1132.2 454.2L1132.7 454.7L1133.2 452.7L1133.7 451.6L1134.2 450.5L1134.7 450.7L1135.2 452.6L1135.7 453.4L1136.2 453.9L1136.7 453.8L1137.2 453.2L1137.7 452.6L1138.2 451.7L1138.7 451.2L1139.2 450.8L1139.7 450.9L1140.2 451.6L1140.7 452.5L1141.2 454.1L1141.7 454.6L1142.2 454.2L1142.7 453.7L1143.2 452.1L1143.7 445.5L1144.2 437.7L1144.7 434.2L1145.2 436.8L1145.7 444.2L1146.2 448.9L1146.7 450.3L1147.2 453.6L1147.7 453.9L1148.2 451.7L1148.7 451.7L1149.2 453.8L1149.7 454.3L1150.2 453.7L1150.7 453.4L1151.2 453.1L1151.7 453.2L1152.2 434.4L1152.7 379.6L1153.2 336.9L1153.7 309.8L1154.2 294.5L1154.7 287.5L1155.2 284.7L1155.7 287.1L1156.2 293.5L1156.7 307.5L1157.2 333.2L1157.7 373.8L1158.2 428.2L1158.7 452.4L1159.2 452.7L1159.7 452.4L1160.2 451.9L1160.7 451.6L1161.2 450.8L1161.7 447.2L1162.2 436.7L1162.7 430.8L1163.2 432.5L1163.7 442.3L1164.2 452.1L1164.7 453.4L1165.2 453.4L1165.7 453.7L1166.2 454.6L1166.7 454.5L1167.2 449.1L1167.7 408.0L1168.2 362.5L1168.7 333.2L1169.2 317.2L1169.7 309.9L1170.2 306.9L1170.7 309.8L1171.2 317.2L1171.7 333.6L1172.2 363.3L1172.7 408.9L1173.2 445.7L1173.7 449.4L1174.2 453.1L1174.7 454.0L1175.2 452.1L1175.7 451.8L1176.2 452.9L1176.7 453.0L1177.2 449.3L1177.7 424.7L1178.2 394.0L1178.7 375.2L1179.2 366.4L1179.7 363.1L1180.2 365.7L1180.7 373.3L1181.2 390.3L1181.7 419.8L1182.2 449.0L1182.7 453.9L1183.2 451.5L1183.7 451.5L1184.2 453.9L1184.7 453.9L1185.2 451.5L1185.7 451.0L1186.2 451.7L1186.7 451.0L1187.2 446.5L1187.7 437.1L1188.2 432.7L1188.7 435.6L1189.2 446.6L1189.7 454.1L1190.2 453.6L1190.7 453.1L1191.2 452.7L1191.7 452.5L1192.2 452.2L1192.7 452.1L1193.2 452.4L1193.7 452.3L1194.2 451.8L1194.7 451.6L1195.2 451.8L1195.7 452.0L1196.2 450.1L1196.7 441.3L1197.2 436.5L1197.7 437.6L1198.2 443.3L1198.7 448.6L1199.2 450.5L1199.7 452.1L1200.2 454.1L1200.7 452.6L1201.2 427.6L1201.7 390.8L1202.2 367.1L1202.7 355.2L1203.2 350.3L1203.7 350.6L1204.2 356.1L1204.7 369.2L1205.2 394.5L1205.7 431.9L1206.2 453.8L1206.7 455.2L1207.2 453.3L1207.7 452.5L1208.2 451.9L1208.7 451.7L1209.2 451.9L1209.7 451.8L1210.2 451.7L1210.7 451.5L1211.2 451.2L1211.7 451.3L1212.2 452.4L1212.7 452.4L1213.2 452.2L1213.7 452.3L1214.2 452.8L1214.7 453.0L1215.2 452.9L1215.7 453.3L1216.2 454.2L1216.7 454.2L1217.2 453.1L1217.7 452.6L1218.2 452.0L1218.7 452.1L1219.2 453.2L1219.7 453.7L1220.2 453.9L1220.7 453.8L1221.2 453.1L1221.7 452.6L1222.2 452.1L1222.7 451.9L1223.2 451.8L1223.7 452.3L1224.2 453.8L1224.7 453.9L1225.2 452.9L1225.7 452.7L1226.2 453.3L1226.7 453.3L1227.2 452.8L1227.7 453.1L1228.2 454.5L1228.7 454.4L1229.2 452.7L1229.7 452.3L1230.2 453.0L1230.7 453.2L1231.2 452.8L1231.7 452.8L1232.2 453.0L1232.7 453.2L1233.2 453.7L1233.7 453.6L1234.2 452.7L1234.7 452.6L1235.2 453.2L1235.7 453.4L1236.2 453.5L1236.7 453.3L1237.2 452.6L1237.7 452.2L1238.2 452.0L1238.7 452.2L1239.2 453.2L1239.7 453.3L1240.2 452.4L1240.7 452.3L1241.2 453.2L1241.7 453.4L1242.2 453.1L1242.7 452.8L1243.2 452.4L1243.7 452.2L1244.2 452.1L1244.7 452.0L1245.2 451.9L1245.7 451.7L1246.2 451.5L1246.7 451.7L1247.2 452.6L1247.7 453.0L1248.2 453.5L1248.7 453.1L1249.2 451.5L1249.7 451.1L1250.2 451.5L1250.7 452.0L1251.2 452.9L1251.7 453.0L1252.2 452.5L1252.7 452.5L1253.2 453.1L1253.7 453.5L1254.2 454.1L1254.7 453.9L1255.2 452.5L1255.7 451.4L1256.2 450.5L1256.7 450.7L1257.2 452.1L1257.7 452.5L1258.2 451.7L1258.7 451.4L1259.2 451.5L1259.7 452.0L1260.1 453.1L1260.6 453.6L1261.1 453.9L1261.6 454.1L1262.1 454.5L1262.6 454.3L1263.1 453.3L1263.6 453.0L1264.1 453.2L1264.6 453.1L1265.1 452.7L1265.6 452.7L1266.1 452.8L1266.6 453.0L1267.1 453.4L1267.6 453.5L1268.1 453.3L1268.6 453.5L1269.1 454.1L1269.6 453.8L1270.1 452.3L1270.6 451.6L1271.1 451.5L1271.6 451.6L1272.1 452.0L1272.6 452.6L1273.1 453.3L1273.6 453.4L1274.1 453.0L1274.6 452.7L1275.1 452.4L1275.6 452.5L1276.1 453.0L1276.6 453.3L1277.1 453.6L1277.6 453.1L1278.1 451.4L1278.6 451.3L1279.1 452.6L1279.6 453.0L1280.1 452.5L1280.6 452.5L1281.1 452.9L1281.6 453.1L1282.1 453.5L1282.6 453.2L1283.1 452.1L1283.6 451.8L1284.1 452.3L1284.6 452.4L1285.1 452.4L1285.6 452.9L1286.1 454.2L1286.6 454.2L1287.1 452.8L1287.6 452.1L1288.1 451.8L1288.6 451.7L1289.1 452.0L1289.6 452.1L1290.1 452.3L1290.6 452.1L1291.1 451.3L1291.6 451.2L1292.1 451.7L1292.6 451.8L1293.1 451.5L1293.6 451.4L1294.1 451.1L1294.6 450.9L1295.1 450.9L1295.6 451.3L1296.1 452.5L1296.6 452.2L1297.1 450.5L1297.6 450.4L1298.1 451.7L1298.6 452.5L1299.1 453.1L1299.6 452.9L1300.1 451.6L1300.6 451.5L1301.1 452.6L1301.6 452.7L1302.1 451.9L1302.6 452.1L1303.1 453.2L1303.6 453.3L1304.1 452.4L1304.6 451.9L1305.1 451.6L1305.6 451.3L1306.1 451.0L1306.6 451.0L1307.1 451.3L1307.6 451.4L1308.1 451.6L1308.6 451.7L1309.1 451.6L1309.6 451.0L1310.1 449.4L1310.6 449.2L1311.1 450.5L1311.6 450.9L1312.1 450.6L1312.6 450.0L1313.1 448.5L1313.6 448.9L1314.1 451.4L1314.6 452.3L1315.1 452.5L1315.6 452.3L1316.1 451.5L1316.6 451.1L1317.1 450.6L1317.6 450.6L1318.1 451.1L1318.6 451.0L1319.1 450.1L1319.6 449.8L1320.1 449.8L1320.6 449.3L1321.1 448.6L1321.6 448.4L1322.1 448.8L1322.6 449.7L1323.1 450.9L1323.6 450.7L1324.1 449.0L1324.6 448.4L1325.1 448.8L1325.6 448.3L1326.1 446.6L1326.6 446.4L1327.1 447.5L1327.6 448.1L1328.1 449.0L1328.6 449.1L1329.1 448.6L1329.6 448.4L1330.1 448.5L1330.6 448.8L1331.1 449.6L1331.6 450.0L1332.1 450.6L1332.6 450.0L1333.1 447.7L1333.6 446.7L1334.1 446.2L1334.6 446.7L1335.1 448.5L1335.6 448.2L1336.1 446.4L1336.6 446.3L1337.1 448.1L1337.6 448.4L1338.1 447.0L1338.6 446.3L1339.1 446.1L1339.6 446.6L1340.1 448.3L1340.6 448.8L1341.1 448.5L1341.6 448.4L1342.1 448.6L1342.6 448.4L1343.1 447.6L1343.6 447.0L1344.1 446.3L1344.6 446.0L1345.1 445.8L1345.6 446.1L1346.1 447.4L1346.6 448.1L1347.1 448.7L1347.6 448.4L1348.1 446.9L1348.6 446.3L1349.1 446.2L1349.6 446.5L1350.1 447.5L1350.6 447.6L1351.1 447.1L1351.6 446.9L1352.1 446.7L1352.6 446.4L1353.1 445.9L1353.6 446.0L1354.1 446.8L1354.6 446.9L1355.1 446.5L1355.6 446.5L1356.1 446.8L1356.6 447.3L1357.1 448.4L1357.6 448.2L1358.1 446.6L1358.6 446.2L1359.1 446.8L1359.6 446.7L1360.1 445.8L1360.6 446.2L1361.1 448.4L1361.6 449.0L1362.1 448.5L1362.6 448.0L1363.1 447.0L1363.6 447.4L1364.1 449.4L1364.6 449.5L1365.1 448.0L1365.6 447.5L1366.1 447.8L1366.6 447.9L1367.1 447.9L1367.6 446.7L1368.1 444.3L1368.6 445.0L1369.1 449.1L1369.6 450.2" fill="none" stroke="#5cd65c" stroke-width="1" stroke-linejoin="round"/><path d="M711.4 406.9L711.9 404.6L712.4 403.8L712.9 405.4L713.4 411.0L713.9 415.3L714.4 419.8L714.9 419.5L715.4 413.9L715.9 412.2L716.4 412.8L716.9 413.2L717.4 413.7L717.9 413.2L718.4 411.4L718.9 410.7L719.4 410.4L719.9 411.4L720.4 414.6L720.9 415.5L721.4 415.2L721.9 414.7L722.4 413.8L722.9 412.7L723.4 410.2L723.9 409.4L724.4 409.7L724.9 411.1L725.4 415.1L725.9 416.3L726.4 415.9L726.9 414.4L727.4 410.5L727.9 408.4L728.4 406.7L728.9 407.2L729.4 410.6L729.9 412.3L730.4 413.6L730.9 412.8L731.4 409.0L731.9 408.7L732.4 411.6L732.9 411.9L733.4 409.7L733.9 408.3L734.4 406.5L734.9 406.6L735.4 408.5L735.9 409.6L736.4 410.7L736.9 410.6L737.4 409.2L737.9 409.7L738.4 412.6L738.9 412.1L739.4 408.8L739.9 408.7L740.4 411.8L740.9 412.9L741.4 412.1L741.9 412.0L742.4 412.6L742.9 412.5L743.4 411.9L743.9 411.8L744.4 412.1L744.9 411.0L745.4 408.2L745.9 406.8L746.4 406.7L746.9 407.3L747.4 408.8L747.9 408.7L748.4 406.3L748.9 407.7L749.4 413.8L749.9 413.9L750.4 407.8L750.9 406.8L751.4 410.0L751.9 411.8L752.4 413.8L752.9 413.7L753.4 411.4L753.9 410.4L754.4 409.8L754.9 408.8L755.4 406.7L755.9 407.5L756.4 411.9L756.9 412.5L757.4 409.7L757.9 408.8L758.4 408.9L758.9 410.3L759.4 414.0L759.9 413.0L760.4 408.2L760.9 406.4L761.4 406.3L761.9 406.7L762.4 406.4L762.9 406.0L763.4 405.1L763.9 405.1L764.4 406.2L764.9 406.7L765.4 406.9L765.9 407.1L766.4 407.6L766.9 406.9L767.4 404.6L767.9 405.2L768.4 409.5L768.9 410.4L769.4 408.8L769.9 407.8L770.4 406.7L770.9 407.6L771.4 411.7L771.9 411.0L772.4 404.8L772.9 404.1L773.4 408.5L773.9 409.4L774.4 407.8L774.9 405.6L775.4 400.8L775.9 401.3L776.4 407.5L776.9 409.5L777.4 408.8L777.9 406.9L778.4 402.5L778.9 402.8L779.4 408.3L779.9 409.7L780.4 408.3L780.9 407.1L781.4 405.0L781.9 404.3L782.4 404.4L782.9 404.3L783.4 403.9L783.9 403.9L784.4 404.4L784.9 403.8L785.4 401.7L785.9 401.1L786.4 401.8L786.9 402.3L787.4 403.2L787.9 404.4L788.4 407.1L788.9 408.0L789.4 408.0L789.9 408.9L790.4 411.4L790.9 410.4L791.4 404.9L791.9 404.8L792.4 410.1L792.9 409.9L793.4 404.2L793.9 401.5L794.4 399.5L794.9 400.9L795.4 407.0L795.9 408.9L796.4 408.1L796.9 407.7L797.4 407.3L797.9 406.2L798.4 403.4L798.9 403.7L799.4 407.3L799.9 408.1L800.4 406.5L800.9 406.3L801.4 407.2L801.9 407.3L802.4 406.8L802.9 405.5L803.4 402.2L803.9 402.8L804.4 407.6L804.9 408.6L805.4 406.4L805.9 405.6L806.4 405.2L806.9 404.7L807.4 403.5L807.9 404.7L808.4 409.2L808.9 409.1L809.4 404.1L809.9 402.9L810.4 404.4L810.9 404.6L811.4 403.8L811.9 404.1L812.4 405.9L812.9 407.8L813.4 411.5L813.9 412.1L814.4 410.1L814.9 408.3L815.4 405.3L815.9 404.9L816.4 406.6L816.9 407.3L817.4 407.6L817.9 406.3L818.4 402.5L818.9 400.9L819.4 400.1L819.9 401.6L820.4 406.4L820.9 406.7L821.3 402.6L821.8 404.1L822.3 412.5L822.8 415.5L823.3 415.7L823.8 413.6L824.3 407.5L824.8 406.3L825.3 408.8L825.8 409.0L826.3 407.3L826.8 406.8L827.3 407.0L827.8 407.6L828.3 409.0L828.8 408.9L829.3 407.4L829.8 407.2L830.3 408.4L830.8 410.1L831.3 413.8L831.8 413.8L832.3 410.1L832.8 408.9L833.3 409.1L833.8 407.9L834.3 404.5L834.8 405.5L835.3 411.9L835.8 413.3L836.3 410.9L836.8 410.4L837.3 411.4L837.8 411.6L838.3 411.0L838.8 409.5L839.3 405.8L839.8 405.5L840.3 408.2L840.8 409.8L841.3 411.7L841.8 411.9L842.3 410.6L842.8 409.8L843.3 408.5L843.8 409.4L844.3 413.2L844.8 414.0L845.3 412.4L845.8 410.6L846.3 406.8L846.8 406.0L847.3 407.5L847.8 408.7L848.3 410.7L848.8 411.3L849.3 411.4L849.8 411.5L850.3 411.7L850.8 412.9L851.3 415.9L851.8 415.1L852.3 409.8L852.8 408.5L853.3 409.8L853.8 410.4L854.3 410.8L854.8 412.1L855.3 415.1L855.8 415.8L856.3 414.6L856.8 413.2L857.3 410.7L857.8 410.0L858.3 410.5L858.8 411.3L859.3 412.9L859.8 412.7L860.3 410.6L860.8 409.6L861.3 408.7L861.8 409.6L862.3 413.0L862.8 411.7L863.3 406.8L863.8 406.9L864.3 412.3L864.8 415.1L865.3 415.7L865.8 414.5L866.3 410.4L866.8 409.2L867.3 409.8L867.8 410.1L868.3 410.5L868.8 411.8L869.3 415.0L869.8 416.0L870.3 415.7L870.8 414.9L871.3 412.8L871.8 411.7L872.3 404.2L872.8 393.9L873.3 390.3L873.8 394.8L874.3 407.0L874.8 410.8L875.3 403.6L875.8 400.5L876.3 394.3L876.8 382.1L877.3 372.1L877.8 367.9L878.3 368.1L878.8 373.0L879.3 384.3L879.8 400.1L880.3 407.9L880.8 409.6L881.3 412.3L881.8 412.3L882.3 409.6L882.8 409.6L883.3 411.8L883.8 405.7L884.3 396.0L884.8 392.7L885.3 397.2L885.8 407.1L886.3 410.1L886.8 409.8L887.3 410.7L887.8 411.0L888.3 411.2L888.8 412.3L889.3 415.1L889.8 415.1L890.3 412.4L890.8 410.3L891.3 408.8L891.8 404.6L892.3 394.0L892.8 389.2L893.3 391.1L893.8 399.7L894.3 409.6L894.8 411.5L895.3 412.1L895.8 413.4L896.3 416.6L896.8 417.5L897.3 417.1L897.8 415.9L898.3 413.1L898.8 411.0L899.3 407.7L899.8 408.5L900.3 414.1L900.8 415.7L901.3 414.5L901.8 406.7L902.3 382.1L902.8 361.1L903.3 350.3L903.8 346.0L904.3 346.4L904.8 351.6L905.3 363.9L905.8 385.9L906.3 402.4L906.8 405.7L907.3 402.5L907.8 390.0L908.3 384.8L908.8 389.2L909.3 403.5L909.8 411.9L910.3 411.1L910.8 409.8L911.3 405.7L911.8 385.1L912.3 346.4L912.8 320.4L913.3 307.3L913.8 301.3L914.3 299.1L914.8 302.2L915.3 310.4L915.8 328.8L916.3 361.1L916.8 402.1L917.3 415.2L917.8 412.9L918.3 408.4L918.8 408.6L919.3 409.6L919.8 401.9L920.3 397.7L920.8 401.2L921.3 408.2L921.8 410.4L922.3 408.2L922.8 407.2L923.3 404.9L923.8 390.4L924.3 367.6L924.8 352.7L925.3 347.3L925.8 345.7L926.3 348.6L926.8 357.5L927.3 376.1L927.8 400.9L928.3 410.5L928.8 411.1L929.3 412.1L929.8 413.7L930.3 417.2L930.8 416.8L931.3 412.1L931.8 412.3L932.3 417.6L932.8 418.3L933.3 414.1L933.8 409.3L934.3 406.1L934.8 407.0L935.3 409.8L935.8 409.8L936.3 407.2L936.8 408.6L937.3 415.5L937.8 416.4L938.3 412.1L938.8 410.5L939.3 409.8L939.8 408.0L940.3 405.6L940.8 404.3L941.3 404.1L941.8 405.8L942.3 411.0L942.8 413.0L943.3 407.9L943.8 406.7L944.3 408.9L944.8 410.7L945.3 397.1L945.8 353.7L946.3 320.6L946.8 301.4L947.3 292.1L947.8 288.5L948.3 290.1L948.8 295.8L949.3 308.9L949.8 334.4L950.3 374.6L950.8 405.4L951.3 402.6L951.8 401.8L952.3 405.8L952.8 408.6L953.3 410.9L953.8 411.0L954.3 409.6L954.8 410.4L955.3 412.4L955.8 402.7L956.3 390.5L956.8 386.2L957.3 390.3L957.8 401.5L958.3 410.1L958.8 411.6L959.3 414.2L959.8 414.4L960.3 411.1L960.8 405.3L961.3 402.0L961.8 403.6L962.3 409.8L962.8 413.3L963.3 412.9L963.8 411.4L964.3 408.0L964.8 406.7L965.3 406.3L965.8 408.0L966.3 413.0L966.8 410.8L967.3 393.5L967.8 372.9L968.3 360.1L968.8 354.5L969.3 353.4L969.8 357.2L970.3 366.7L970.8 385.4L971.3 403.6L971.8 408.8L972.3 407.9L972.8 407.1L973.3 406.0L973.8 407.2L974.3 411.9L974.8 411.9L975.3 398.2L975.8 383.2L976.3 377.8L976.8 380.5L977.3 391.1L977.8 405.7L978.3 411.4L978.8 409.1L979.3 402.2L979.8 401.3L980.3 405.5L980.8 407.1L981.3 403.7L981.8 401.5L982.3 403.2L982.8 408.1L983.3 413.6L983.8 415.4L984.3 417.0L984.8 415.6L985.3 409.9L985.8 408.4L986.3 409.8L986.8 409.0L987.3 381.2L987.8 341.4L988.3 315.0L988.8 300.6L989.3 294.0L989.8 292.1L990.3 295.8L990.8 304.7L991.3 323.1L991.8 355.3L992.3 397.6L992.8 413.9L993.3 413.4L993.8 412.3L994.3 410.1L994.8 407.8L995.3 405.2L995.8 405.4L996.3 408.3L996.8 410.1L997.3 410.4L997.8 410.7L998.3 409.6L998.8 399.0L999.3 389.4L999.8 386.4L1000.3 389.4L1000.8 398.9L1001.3 410.3L1001.8 411.3L1002.3 407.5L1002.8 408.0L1003.3 413.4L1003.8 414.0L1004.3 410.6L1004.8 409.8L1005.3 411.0L1005.8 412.0L1006.3 413.9L1006.8 416.0L1007.3 420.1L1007.8 418.4L1008.3 409.4L1008.8 408.3L1009.3 414.1L1009.8 416.0L1010.3 415.6L1010.8 414.3L1011.3 408.6L1011.8 401.4L1012.3 398.2L1012.8 399.1L1013.3 402.8L1013.8 408.0L1014.3 411.6L1014.8 413.8L1015.3 416.4L1015.8 415.6L1016.3 410.6L1016.8 408.4L1017.3 408.7L1017.8 409.1L1018.3 410.2L1018.8 407.7L1019.3 396.0L1019.8 384.6L1020.3 375.7L1020.8 372.2L1021.3 373.7L1021.8 379.5L1022.3 391.8L1022.8 406.8L1023.3 412.4L1023.8 414.0L1024.3 417.4L1024.8 417.8L1025.3 415.5L1025.8 414.9L1026.3 415.4L1026.8 415.7L1027.3 416.0L1027.8 415.1L1028.3 412.4L1028.8 411.7L1029.3 412.7L1029.8 411.7L1030.3 407.7L1030.8 406.3L1031.3 404.9L1031.8 395.9L1032.3 386.0L1032.8 382.1L1033.3 385.7L1033.8 398.0L1034.3 412.8L1034.8 414.4L1035.3 411.1L1035.8 410.2L1036.3 408.4L1036.8 384.1L1037.3 351.1L1037.8 331.1L1038.3 322.4L1038.8 319.1L1039.3 320.9L1039.8 327.7L1040.3 343.8L1040.7 372.9L1041.2 409.0L1041.7 419.8L1042.2 417.2L1042.7 416.0L1043.2 415.3L1043.7 414.8L1044.2 414.0L1044.7 414.1L1045.2 415.2L1045.7 413.7L1046.2 408.1L1046.7 407.4L1047.2 411.3L1047.7 411.5L1048.2 408.4L1048.7 407.3L1049.2 402.3L1049.7 394.1L1050.2 390.3L1050.7 394.0L1051.2 407.0L1051.7 414.3L1052.2 411.2L1052.7 411.3L1053.2 415.3L1053.7 415.4L1054.2 411.7L1054.7 409.5L1055.2 407.1L1055.7 408.7L1056.2 415.5L1056.7 417.3L1057.2 415.7L1057.7 414.3L1058.2 411.9L1058.7 411.4L1059.2 412.3L1059.7 413.5L1060.2 416.0L1060.7 415.0L1061.2 409.7L1061.7 408.6L1062.2 411.0L1062.7 410.9L1063.2 408.3L1063.7 408.1L1064.2 410.1L1064.7 411.7L1065.2 409.2L1065.7 396.8L1066.2 389.6L1066.7 389.7L1067.2 394.9L1067.7 405.6L1068.2 414.8L1068.7 416.3L1069.2 414.3L1069.7 411.7L1070.2 407.2L1070.7 406.1L1071.2 407.5L1071.7 408.5L1072.2 408.9L1072.7 410.7L1073.2 415.6L1073.7 414.6L1074.2 407.1L1074.7 406.2L1075.2 410.9L1075.7 412.4L1076.2 412.1L1076.7 411.9L1077.2 412.0L1077.7 412.2L1078.2 412.6L1078.7 413.4L1079.2 414.9L1079.7 415.0L1080.2 413.6L1080.7 411.9L1081.2 408.5L1081.7 409.2L1082.2 411.7L1082.7 401.4L1083.2 394.9L1083.7 396.2L1084.2 402.8L1084.7 409.4L1085.2 410.6L1085.7 410.5L1086.2 409.4L1086.7 402.9L1087.2 394.4L1087.7 394.7L1088.2 405.5L1088.7 413.5L1089.2 412.0L1089.7 410.4L1090.2 401.4L1090.7 391.4L1091.2 389.0L1091.7 394.0L1092.2 404.7L1092.7 409.6L1093.2 413.6L1093.7 415.4L1094.2 416.5L1094.7 416.1L1095.2 413.2L1095.7 403.0L1096.2 377.4L1096.7 357.6L1097.2 346.9L1097.7 342.9L1098.2 344.9L1098.7 351.3L1099.2 365.7L1099.7 390.0L1100.2 411.4L1100.7 413.3L1101.2 408.3L1101.7 407.4L1102.2 409.9L1102.7 410.2L1103.2 404.8L1103.7 399.4L1104.2 398.5L1104.7 404.0L1105.2 411.1L1105.7 411.8L1106.2 410.4L1106.7 409.3L1107.2 407.8L1107.7 407.0L1108.2 407.4L1108.7 408.0L1109.2 409.3L1109.7 410.2L1110.2 410.2L1110.7 409.8L1111.2 408.4L1111.7 408.2L1112.2 404.7L1112.7 379.9L1113.2 351.4L1113.7 334.3L1114.2 326.3L1114.7 323.0L1115.2 324.8L1115.7 331.3L1116.2 346.2L1116.7 371.7L1117.2 398.8L1117.7 406.3L1118.2 410.2L1118.7 411.4L1119.2 410.4L1119.7 410.8L1120.2 413.1L1120.7 412.0L1121.2 408.5L1121.7 408.4L1122.2 406.5L1122.7 396.1L1123.2 389.9L1123.7 391.3L1124.2 400.2L1124.7 410.6L1125.2 411.8L1125.7 400.0L1126.2 373.4L1126.7 353.3L1127.2 342.3L1127.7 338.2L1128.2 339.6L1128.7 344.1L1129.2 353.9L1129.7 374.6L1130.2 400.9L1130.7 412.0L1131.2 412.1L1131.7 413.0L1132.2 416.0L1132.7 416.9L1133.2 416.2L1133.7 414.7L1134.2 411.1L1134.7 410.1L1135.2 411.2L1135.7 411.3L1136.2 410.6L1136.7 409.8L1137.2 408.0L1137.7 407.9L1138.2 409.1L1138.7 411.5L1139.2 416.9L1139.7 418.1L1140.2 416.2L1140.7 415.6L1141.2 415.9L1141.7 415.9L1142.2 415.4L1142.7 416.1L1143.2 417.3L1143.7 407.9L1144.2 396.0L1144.7 391.3L1145.2 394.5L1145.7 404.4L1146.2 413.1L1146.7 413.3L1147.2 411.0L1147.7 410.7L1148.2 412.5L1148.7 411.9L1149.2 408.2L1149.7 409.3L1150.2 416.1L1150.7 418.2L1151.2 417.3L1151.7 415.7L1152.2 407.6L1152.7 371.4L1153.2 330.9L1153.7 304.2L1154.2 289.5L1154.7 282.3L1155.2 278.9L1155.7 281.1L1156.2 287.3L1156.7 301.2L1157.2 326.5L1157.7 365.9L1158.2 405.4L1158.7 413.0L1159.2 412.3L1159.7 411.8L1160.2 411.3L1160.7 411.3L1161.2 411.6L1161.7 408.9L1162.2 400.4L1162.7 397.0L1163.2 400.7L1163.7 408.2L1164.2 411.0L1164.7 412.6L1165.2 418.0L1165.7 417.7L1166.2 411.5L1166.7 408.6L1167.2 406.1L1167.7 391.5L1168.2 354.1L1168.7 325.4L1169.2 309.0L1169.7 301.5L1170.2 298.7L1170.7 301.8L1171.2 309.6L1171.7 326.2L1172.2 355.6L1172.7 395.8L1173.2 411.5L1173.7 410.7L1174.2 410.3L1174.7 411.2L1175.2 414.5L1175.7 415.5L1176.2 415.1L1176.7 414.8L1177.2 413.7L1177.7 403.4L1178.2 382.3L1178.7 365.8L1179.2 358.2L1179.7 355.3L1180.2 358.0L1180.7 365.2L1181.2 380.4L1181.7 400.3L1182.2 410.0L1182.7 411.3L1183.2 412.4L1183.7 413.7L1184.2 416.0L1184.7 416.3L1185.2 414.9L1185.7 412.7L1186.2 407.8L1186.7 407.1L1187.2 408.9L1187.7 406.2L1188.2 404.6L1188.7 406.9L1189.2 413.3L1189.7 415.7L1190.2 413.1L1190.7 412.1L1191.2 411.9L1191.7 412.4L1192.2 413.8L1192.7 413.2L1193.2 409.9L1193.7 409.9L1194.2 413.0L1194.7 410.9L1195.2 404.2L1195.7 402.2L1196.2 403.2L1196.7 402.3L1197.2 402.4L1197.7 403.9L1198.2 406.0L1198.7 408.8L1199.2 411.8L1199.7 413.0L1200.2 413.4L1200.7 412.6L1201.2 404.2L1201.7 381.2L1202.2 359.8L1202.7 348.2L1203.2 343.3L1203.7 343.6L1204.2 349.1L1204.7 361.9L1205.2 384.6L1205.7 406.6L1206.2 410.6L1206.7 409.8L1207.2 408.5L1207.7 409.6L1208.2 414.3L1208.7 415.3L1209.2 413.2L1209.7 412.6L1210.2 413.0L1210.7 412.0L1211.2 408.8L1211.7 408.9L1212.2 412.3L1212.7 412.3L1213.2 410.5L1213.7 410.0L1214.2 410.9L1214.7 411.4L1215.2 411.7L1215.7 411.6L1216.2 410.3L1216.7 410.4L1217.2 412.0L1217.7 411.9L1218.2 410.3L1218.7 411.0L1219.2 414.7L1219.7 415.2L1220.2 412.8L1220.7 411.9L1221.2 411.7L1221.7 411.8L1222.2 412.1L1222.7 412.8L1223.2 414.4L1223.7 412.6L1224.2 407.1L1224.7 407.4L1225.2 413.9L1225.7 415.3L1226.2 411.4L1226.7 410.4L1227.2 411.1L1227.7 411.0L1228.2 409.8L1228.7 410.1L1229.2 411.8L1229.7 412.8L1230.2 413.8L1230.7 413.9L1231.2 413.2L1231.7 413.0L1232.2 412.9L1232.7 412.5L1233.2 411.2L1233.7 411.2L1234.2 412.2L1234.7 411.8L1235.2 410.0L1235.7 409.7L1236.2 410.6L1236.7 410.6L1237.2 409.6L1237.7 410.6L1238.2 414.5L1238.7 415.3L1239.2 413.4L1239.7 412.3L1240.2 411.1L1240.7 410.6L1241.2 410.6L1241.7 411.1L1242.2 412.6L1242.7 413.0L1243.2 412.6L1243.7 412.4L1244.2 412.2L1244.7 412.1L1245.2 411.8L1245.7 412.0L1246.2 412.8L1246.7 413.1L1247.2 413.2L1247.7 413.4L1248.2 414.0L1248.7 413.9L1249.2 413.0L1249.7 412.0L1250.2 409.9L1250.7 410.2L1251.2 412.9L1251.7 413.0L1252.2 410.8L1252.7 409.6L1253.2 408.5L1253.7 408.8L1254.2 410.8L1254.7 410.2L1255.2 406.9L1255.7 407.0L1256.2 410.8L1256.7 411.5L1257.2 409.4L1257.7 409.3L1258.2 411.3L1258.7 412.5L1259.2 413.8L1259.7 413.7L1260.1 411.9L1260.6 410.6L1261.1 408.8L1261.6 408.9L1262.1 411.2L1262.6 411.1L1263.1 409.1L1263.6 409.6L1264.1 412.6L1264.6 413.8L1265.1 413.7L1265.6 413.1L1266.1 411.6L1266.6 411.3L1267.1 412.0L1267.6 412.0L1268.1 411.1L1268.6 410.5L1269.1 409.7L1269.6 410.4L1270.1 413.2L1270.6 414.0L1271.1 413.5L1271.6 413.0L1272.1 412.1L1272.6 410.9L1273.1 408.2L1273.6 408.4L1274.1 411.5L1274.6 412.6L1275.1 412.8L1275.6 412.5L1276.1 411.4L1276.6 410.3L1277.1 408.4L1277.6 408.8L1278.1 411.9L1278.6 412.9L1279.1 412.6L1279.6 412.3L1280.1 411.9L1280.6 411.5L1281.1 410.7L1281.6 409.8L1282.1 408.1L1282.6 408.9L1283.1 412.9L1283.6 414.5L1284.1 415.0L1284.6 414.4L1285.1 412.3L1285.6 411.4L1286.1 410.9L1286.6 411.9L1287.1 415.1L1287.6 415.6L1288.1 413.7L1288.6 412.4L1289.1 410.6L1289.6 410.5L1290.1 412.3L1290.6 412.4L1291.1 411.3L1291.6 411.0L1292.1 411.3L1292.6 411.3L1293.1 410.7L1293.6 410.6L1294.1 410.9L1294.6 411.0L1295.1 411.2L1295.6 410.9L1296.1 409.7L1296.6 410.1L1297.1 412.2L1297.6 412.6L1298.1 411.8L1298.6 411.1L1299.1 410.0L1299.6 410.2L1300.1 412.2L1300.6 412.8L1301.1 412.6L1301.6 412.6L1302.1 412.7L1302.6 413.0L1303.1 413.5L1303.6 412.5L1304.1 408.7L1304.6 408.0L1305.1 410.0L1305.6 408.9L1306.1 404.8L1306.6 402.8L1307.1 402.9L1307.6 404.8L1308.1 409.4L1308.6 411.7L1309.1 412.2L1309.6 412.1L1310.1 411.4L1310.6 411.2L1311.1 411.7L1311.6 409.3L1312.1 403.9L1312.6 404.2L1313.1 410.9L1313.6 413.4L1314.1 411.8L1314.6 411.1L1315.1 410.7L1315.6 410.9L1316.1 411.9L1316.6 412.3L1317.1 412.3L1317.6 411.9L1318.1 410.6L1318.6 410.2L1319.1 410.2L1319.6 410.5L1320.1 411.6L1320.6 411.9L1321.1 411.8L1321.6 412.0L1322.1 413.0L1322.6 412.6L1323.1 410.7L1323.6 410.0L1324.1 410.2L1324.6 409.8L1325.1 409.9L1325.6 410.5L1326.1 411.7L1326.6 412.0L1327.1 410.4L1327.6 410.0L1328.1 410.6L1328.6 411.6L1329.1 413.7L1329.6 413.4L1330.1 410.4L1330.6 409.4L1331.1 409.7L1331.6 409.6L1332.1 409.5L1332.6 405.0L1333.1 400.0L1333.6 400.7L1334.1 407.7L1334.6 410.0L1335.1 408.1L1335.6 408.1L1336.1 409.8L1336.6 409.5L1337.1 407.0L1337.6 406.0L1338.1 405.6L1338.6 405.9L1339.1 407.3L1339.6 407.6L1340.1 407.1L1340.6 405.7L1341.1 404.2L1341.6 404.3L1342.1 406.0L1342.6 408.7L1343.1 412.5L1343.6 409.5L1344.1 398.9L1344.6 397.1L1345.1 402.9L1345.6 407.4L1346.1 413.1L1346.6 415.9L1347.1 418.3L1347.6 416.2L1348.1 407.9L1348.6 406.5L1349.1 411.1L1349.6 411.7L1350.1 408.7L1350.6 409.1L1351.1 413.0L1351.6 413.3L1352.1 410.4L1352.6 409.9L1353.1 411.5L1353.6 411.1L1354.1 408.5L1354.6 408.2L1355.1 410.2L1355.6 409.5L1356.1 405.7L1356.6 406.0L1357.1 410.8L1357.6 410.9L1358.1 406.6L1358.6 406.1L1359.1 408.8L1359.6 409.4L1360.1 408.2L1360.6 409.4L1361.1 413.9L1361.6 415.6L1362.1 415.9L1362.6 413.9L1363.1 408.0L1363.6 407.6L1364.1 412.5L1364.6 410.8L1365.1 403.6L1365.6 403.0L1366.1 408.2L1366.6 411.3L1367.1 412.5L1367.6 412.2L1368.1 409.8L1368.6 410.2L1369.1 413.6L1369.6 413.8" fill="none" stroke="#ff4054" stroke-width="1.05" stroke-linejoin="round"/></svg>
<div class="t" style="right:809.6px;top:272px;font-size:13.2px;line-height:15px;color:#e6e6e6;">-60</div>
<div class="t" style="right:809.6px;top:316px;font-size:13.2px;line-height:15px;color:#e6e6e6;">-70</div>
<div class="t" style="right:809.6px;top:360px;font-size:13.2px;line-height:15px;color:#e6e6e6;">-80</div>
<div class="t" style="right:809.6px;top:404px;font-size:13.2px;line-height:15px;color:#e6e6e6;">-90</div>
<div class="t" style="right:809.6px;top:448px;font-size:13.2px;line-height:15px;color:#e6e6e6;">-100</div>
<div class="t" style="left:598.5px;width:300px;text-align:center;top:473px;font-size:13.2px;line-height:15px;color:#e6e6e6;">80</div>
<div class="t" style="left:762.9px;width:300px;text-align:center;top:473px;font-size:13.2px;line-height:15px;color:#e6e6e6;">90</div>
<div class="t" style="left:927.3px;width:300px;text-align:center;top:473px;font-size:13.2px;line-height:15px;color:#e6e6e6;">100</div>
<div class="t" style="left:1091.7px;width:300px;text-align:center;top:473px;font-size:13.2px;line-height:15px;color:#e6e6e6;">110</div>
<div class="t" style="left:890.0px;width:300px;text-align:center;top:485px;font-size:13.2px;line-height:15px;color:#f0f0f0;">Frequency / MHz</div>
<div class="t" style="left:1371.5px;top:331.5px;font-size:13px;line-height:15px;color:#f0f0f0;letter-spacing:0px;transform-origin:0 0;transform:translate(16px,0) rotate(90deg);">Power / dBm</div>
<svg style="left:664px;top:479px" width="16" height="22" viewBox="664 479 16 22"><path d="M672 482V497.5M667.6 486 L672 481.6 L676.4 486M667.6 493.5 L672 497.9 L676.4 493.5" fill="none" stroke="#f4f4f4" stroke-width="1.6"/></svg>
<div class="a" style="left:655.3px;top:507.6px;width:737.3px;height:261.9px;background:#3c3c3c;"></div>
<div class="a" style="left:657.9px;top:530.0px;width:732.1px;height:239.5px;background:#000;"></div>
<div class="a" style="left:655.3px;top:507.6px;width:737.3px;height:23.2px;background:#474747;"></div>
<div class="t" style="left:661.8px;top:512px;font-size:13.6px;line-height:15px;color:#e4e4e4;letter-spacing:-0.2px;">Spectrogram</div>
<div class="a" style="left:741.6px;top:512.0px;width:24.4px;height:15.2px;background:#000;border-radius:3px;"></div>
<div class="t" style="left:744.4px;top:514px;font-size:11.6px;line-height:12px;color:#e8283c;font-weight:700;letter-spacing:-0.3px;">+Pk</div>
<div class="a" style="left:770.1px;top:507.6px;width:546.4px;height:21.6px;background:linear-gradient(90deg,#000088 0.0%,#0000ba 4.2%,#0000eb 8.3%,#0020ff 12.5%,#0055ff 16.7%,#008aff 20.8%,#00bfff 25.0%,#00f4ff 29.2%,#00ffd8 33.3%,#00ffa8 37.5%,#00ff78 41.7%,#00ff47 45.8%,#00ff17 50.0%,#1fff00 54.2%,#5aff00 58.3%,#95ff00 62.5%,#d0ff00 66.7%,#fff400 70.8%,#ffbe00 75.0%,#ff8700 79.2%,#ff5100 83.3%,#ff1a00 87.5%,#e90000 91.7%,#c00000 95.8%,#960000 100.0%);"></div>
<div class="a" style="left:795.9px;top:507.8px;width:1.0px;height:2.6px;background:#fff;"></div>
<div class="a" style="left:795.9px;top:526.6px;width:1.0px;height:2.4px;background:#fff;"></div>
<div class="t" style="left:646.4px;width:300px;text-align:center;top:514px;font-size:11px;line-height:12px;color:rgba(255,255,255,.85);letter-spacing:-0.2px;">-100</div>
<div class="a" style="left:1049.5px;top:507.8px;width:1.0px;height:2.6px;background:#fff;"></div>
<div class="a" style="left:1049.5px;top:526.6px;width:1.0px;height:2.4px;background:#fff;"></div>
<div class="t" style="left:900.0px;width:300px;text-align:center;top:514px;font-size:11px;line-height:12px;color:rgba(255,255,255,.85);letter-spacing:-0.2px;">-80</div>
<div class="a" style="left:1302.9px;top:507.8px;width:1.0px;height:2.6px;background:#fff;"></div>
<div class="a" style="left:1302.9px;top:526.6px;width:1.0px;height:2.4px;background:#fff;"></div>
<div class="t" style="left:1153.4px;width:300px;text-align:center;top:514px;font-size:11px;line-height:12px;color:rgba(255,255,255,.85);letter-spacing:-0.2px;">-60</div>
<div class="t" style="left:1320.4px;top:513px;font-size:11.8px;line-height:14px;color:#cfcfcf;letter-spacing:-0.1px;">dBm</div>
<div class="a" style="left:1351.2px;top:509.1px;width:34.8px;height:19.7px;background:#686868;border:1px solid #9a9a9a;"></div>
<div class="a" style="left:1362.9px;top:513.5px;width:12.1px;height:10.4px;border:1.4px solid #e6e6e6;border-radius:2px;"></div>
<div class="a" style="left:1001.8px;top:502.0px;width:42.1px;height:9.0px;background:#000;"></div>
<div class="a" style="left:1001.8px;top:502.1px;width:42.1px;height:2.8px;background:#fff;"></div>
<div class="a" style="left:1001.8px;top:508.1px;width:42.1px;height:2.8px;background:#fff;"></div>
<div class="a" style="left:711.0px;top:541.8px;width:658.2px;height:190.2px;background:linear-gradient(90deg,#00f4ff 0.06%,#00f4ff 0.21%,#00f4ff 0.36%,#00f3ff 0.52%,#00f0ff 0.67%,#00efff 0.82%,#00eeff 0.97%,#00efff 1.12%,#00f1ff 1.28%,#00f3ff 1.43%,#00f6ff 1.58%,#00f7ff 1.73%,#00f7ff 1.88%,#00f7ff 2.03%,#00f7ff 2.19%,#00f7ff 2.34%,#00f4ff 2.49%,#00f0ff 2.64%,#00efff 2.79%,#00f2ff 2.95%,#00f4ff 3.10%,#00f5ff 3.25%,#00f3ff 3.40%,#00f6ff 3.55%,#00f7ff 3.71%,#00f7ff 3.86%,#00f5ff 4.01%,#00f6ff 4.16%,#00faff 4.31%,#00fbff 4.46%,#00f9ff 4.62%,#00f8ff 4.77%,#00f6ff 4.92%,#00f5ff 5.07%,#00f3ff 5.22%,#00f2ff 5.38%,#00f4ff 5.53%,#00f4ff 5.68%,#00f7ff 5.83%,#00faff 5.98%,#00faff 6.14%,#00fbff 6.29%,#00f9ff 6.44%,#00f9ff 6.59%,#00fcff 6.74%,#00f9ff 6.89%,#00faff 7.05%,#00ffff 7.20%,#00fffc 7.35%,#00fff8 7.50%,#00fff5 7.65%,#00fff1 7.81%,#00ffef 7.96%,#00ffed 8.11%,#00ffef 8.26%,#00fff1 8.41%,#00fff4 8.56%,#00fff4 8.72%,#00fff3 8.87%,#00fff1 9.02%,#00ffee 9.17%,#00ffec 9.32%,#00ffe9 9.48%,#00ffe6 9.63%,#00ffe8 9.78%,#00ffe8 9.93%,#00ffe5 10.08%,#00ffe7 10.24%,#00ffe5 10.39%,#00ffe4 10.54%,#00ffe1 10.69%,#00ffde 10.84%,#00ffdd 10.99%,#00ffde 11.15%,#00ffdd 11.30%,#00ffdf 11.45%,#00ffdd 11.60%,#00ffe0 11.75%,#00ffe1 11.91%,#00ffe1 12.06%,#00ffe3 12.21%,#00ffe2 12.36%,#00ffe0 12.51%,#00ffe1 12.67%,#00ffe1 12.82%,#00ffe5 12.97%,#00ffe7 13.12%,#00ffe8 13.27%,#00ffe9 13.42%,#00ffec 13.58%,#00ffec 13.73%,#00ffec 13.88%,#00ffe8 14.03%,#00ffe7 14.18%,#00ffe7 14.34%,#00ffe7 14.49%,#00ffe4 14.64%,#00ffe3 14.79%,#00ffe5 14.94%,#00ffe6 15.09%,#00ffe6 15.25%,#00ffe4 15.40%,#00ffe5 15.55%,#00ffe9 15.70%,#00ffec 15.85%,#00ffeb 16.01%,#00ffeb 16.16%,#00ffed 16.31%,#00fff0 16.46%,#00fff2 16.61%,#00fff2 16.77%,#00fff2 16.92%,#00fff3 17.07%,#00fff3 17.22%,#00fff3 17.37%,#00fff4 17.52%,#00fff3 17.68%,#00fff5 17.83%,#00fff5 17.98%,#00fff8 18.13%,#00fffc 18.28%,#00fffd 18.44%,#00fffd 18.59%,#00ffff 18.74%,#00ffff 18.89%,#00fdff 19.04%,#00fcff 19.20%,#00feff 19.35%,#00fffe 19.50%,#00fffe 19.65%,#00ffff 19.80%,#00ffff 19.95%,#00ffff 20.11%,#00ffff 20.26%,#00ffff 20.41%,#00fbff 20.56%,#00f7ff 20.71%,#00f6ff 20.87%,#00f5ff 21.02%,#00f5ff 21.17%,#00f7ff 21.32%,#00f5ff 21.47%,#00f7ff 21.62%,#00faff 21.78%,#00fbff 21.93%,#00fcff 22.08%,#00fcff 22.23%,#00f9ff 22.38%,#00fbff 22.54%,#00f8ff 22.69%,#00f7ff 22.84%,#00f7ff 22.99%,#00f7ff 23.14%,#00f5ff 23.30%,#00f5ff 23.45%,#00f4ff 23.60%,#00f7ff 23.75%,#00f6ff 23.90%,#00f6ff 24.05%,#00f5ff 24.21%,#00fffc 24.36%,#00ffa9 24.51%,#00ff8f 24.66%,#00ff9f 24.81%,#00ff72 24.97%,#00ff27 25.12%,#00ff04 25.27%,#00ff05 25.42%,#00ff2a 25.57%,#00ff88 25.73%,#00fff7 25.88%,#00f5ff 26.03%,#00fffc 26.18%,#00ffa8 26.33%,#00ffba 26.48%,#00feff 26.64%,#00f5ff 26.79%,#00f8ff 26.94%,#00faff 27.09%,#00fff7 27.24%,#00ffaa 27.40%,#00ff88 27.55%,#00ff90 27.70%,#00ffb5 27.85%,#00ffff 28.00%,#00f3ff 28.15%,#00f3ff 28.31%,#00f2ff 28.46%,#00fff8 28.61%,#00ff7a 28.76%,#06ff00 28.91%,#73ff00 29.07%,#9fff00 29.22%,#9cff00 29.37%,#6eff00 29.52%,#00ff0a 29.67%,#00ff74 29.83%,#00ff6f 29.98%,#00ff64 30.13%,#89ff00 30.28%,#ffc900 30.43%,#ff4f00 30.58%,#ff2200 30.74%,#ff1600 30.89%,#ff3a00 31.04%,#ff8b00 31.19%,#ceff00 31.34%,#00ff62 31.50%,#00ffe2 31.65%,#00ffc6 31.80%,#00ffdd 31.95%,#00ff4b 32.10%,#3dff00 32.26%,#7dff00 32.41%,#9eff00 32.56%,#8eff00 32.71%,#5bff00 32.86%,#00ff35 33.01%,#00ffe3 33.17%,#00fffd 33.32%,#00fffc 33.47%,#00fffc 33.62%,#00fffb 33.77%,#00fffd 33.93%,#00fffc 34.08%,#00fffb 34.23%,#00fffa 34.38%,#00fffa 34.53%,#00fffa 34.68%,#00fffb 34.84%,#00fff7 34.99%,#00ffdf 35.14%,#00ff38 35.29%,#fff000 35.44%,#ff4b00 35.60%,#f40000 35.75%,#d80000 35.90%,#de0000 36.05%,#ff0200 36.20%,#ff7a00 36.36%,#c6ff00 36.51%,#00ffbc 36.66%,#00ffee 36.81%,#00ffe0 36.96%,#00ff97 37.11%,#00ff77 37.27%,#00ff8a 37.42%,#00ffad 37.57%,#00ffe5 37.72%,#00fff0 37.87%,#00fff1 38.03%,#00fff5 38.18%,#00fff7 38.33%,#00fff8 38.48%,#00ffe4 38.63%,#00ff48 38.79%,#31ff00 38.94%,#60ff00 39.09%,#66ff00 39.24%,#3dff00 39.39%,#00ff1f 39.54%,#00ff94 39.70%,#00ffd4 39.85%,#00ff87 40.00%,#00ff5d 40.15%,#00ff44 40.30%,#00ff62 40.46%,#00ffac 40.61%,#00ffe8 40.76%,#00fff0 40.91%,#00ffed 41.06%,#00ffed 41.21%,#00ffec 41.37%,#00ffce 41.52%,#03ff00 41.67%,#ffe100 41.82%,#ff4900 41.97%,#ff0700 42.13%,#ec0000 42.28%,#fb0000 42.43%,#ff2b00 42.58%,#ffb500 42.73%,#6fff00 42.89%,#00ffbf 43.04%,#00ffe9 43.19%,#00ffe8 43.34%,#00ffdd 43.49%,#00ff98 43.64%,#00ff77 43.80%,#00ff85 43.95%,#00ffa9 44.10%,#00ffe6 44.25%,#00fff2 44.40%,#00fff4 44.56%,#00fff7 44.71%,#00fff4 44.86%,#00fff2 45.01%,#00fff2 45.16%,#00fff1 45.32%,#00fff0 45.47%,#00ffef 45.62%,#00ffef 45.77%,#00fff2 45.92%,#00fff4 46.07%,#00fff2 46.23%,#00fff1 46.38%,#00ffe2 46.53%,#00ff8a 46.68%,#00ff40 46.83%,#00ff1f 46.99%,#00ff26 47.14%,#00ff4d 47.29%,#00ffad 47.44%,#00ffec 47.59%,#00fff6 47.74%,#00fff7 47.90%,#00fff8 48.05%,#00fff6 48.20%,#00fff4 48.35%,#00ffe2 48.50%,#00ff82 48.66%,#00ff5d 48.81%,#00ff6e 48.96%,#00ff71 49.11%,#42ff00 49.26%,#e3ff00 49.42%,#ffc400 49.57%,#ffa000 49.72%,#ffa900 49.87%,#ffd800 50.02%,#98ff00 50.17%,#00ff18 50.33%,#00ffd7 50.48%,#00fff4 50.63%,#00fff6 50.78%,#00fff4 50.93%,#00fff6 51.09%,#00ffee 51.24%,#00ffa8 51.39%,#00ff90 51.54%,#00ffae 51.69%,#00ffea 51.85%,#00fff4 52.00%,#00fff4 52.15%,#00fff7 52.30%,#00fff5 52.45%,#00fff6 52.60%,#00fffa 52.76%,#00fffb 52.91%,#00fff9 53.06%,#00fff8 53.21%,#00fff4 53.36%,#00fff4 53.52%,#00ffed 53.67%,#00ffab 53.82%,#00ff8c 53.97%,#00ffab 54.12%,#00ffef 54.27%,#00fff8 54.43%,#00fff9 54.58%,#00fff7 54.73%,#00fff5 54.88%,#00fff4 55.03%,#00fff4 55.19%,#00fff5 55.34%,#00fff5 55.49%,#00fff4 55.64%,#00fff2 55.79%,#00fff2 55.95%,#00fff0 56.10%,#00fff2 56.25%,#00ffe8 56.40%,#00ffb7 56.55%,#00ffe9 56.70%,#00fff3 56.86%,#00ffea 57.01%,#00ffb6 57.16%,#00ffe5 57.31%,#00ffb5 57.46%,#00ff92 57.62%,#00ff86 57.77%,#00ffa8 57.92%,#00ffe0 58.07%,#00ff66 58.22%,#1fff00 58.38%,#8bff00 58.53%,#b4ff00 58.68%,#a9ff00 58.83%,#77ff00 58.98%,#00ff13 59.13%,#00ff91 59.29%,#00ffee 59.44%,#00fff7 59.59%,#00fff4 59.74%,#00fff2 59.89%,#00fff1 60.05%,#00ffef 60.20%,#00ffee 60.35%,#00ffed 60.50%,#00ffcb 60.65%,#20ff00 60.80%,#cbff00 60.96%,#ffde00 61.11%,#ffbb00 61.26%,#ffc400 61.41%,#fff200 61.56%,#7dff00 61.72%,#00ff26 61.87%,#00ffd7 62.02%,#00fff1 62.17%,#00ffe9 62.32%,#00ffac 62.48%,#00ff83 62.63%,#00ff40 62.78%,#40ff00 62.93%,#adff00 63.08%,#d8ff00 63.23%,#d0ff00 63.39%,#a4ff00 63.54%,#3bff00 63.69%,#00ff51 63.84%,#00ffe1 63.99%,#00fff6 64.15%,#00fff8 64.30%,#00fff8 64.45%,#00fff6 64.60%,#00fff4 64.75%,#00fff2 64.91%,#00ffef 65.06%,#00ffef 65.21%,#00ffee 65.36%,#00ffe7 65.51%,#00ffb3 65.66%,#00ff95 65.82%,#00ffaa 65.97%,#00ffec 66.12%,#00fff3 66.27%,#00fff0 66.42%,#00ffea 66.58%,#00ff8d 66.73%,#eeff00 66.88%,#ff5300 67.03%,#d90000 67.18%,#b40000 67.33%,#a60000 67.49%,#bf0000 67.64%,#f10000 67.79%,#ff8400 67.94%,#62ff00 68.09%,#00ffcb 68.25%,#00ffeb 68.40%,#00ffc1 68.55%,#00ffeb 68.70%,#00fff5 68.85%,#00ffcd 69.01%,#5bff00 69.16%,#ffd900 69.31%,#ff5200 69.46%,#ff2300 69.61%,#ff1400 69.76%,#ff3600 69.92%,#ff8500 70.07%,#d8ff00 70.22%,#00ff48 70.37%,#00ffd9 70.52%,#00ff91 70.68%,#00ff1b 70.83%,#32ff00 70.98%,#57ff00 71.13%,#48ff00 71.28%,#14ff00 71.44%,#00ff68 71.59%,#00ffef 71.74%,#00fcff 71.89%,#00fdff 72.04%,#00fcff 72.19%,#00fcff 72.35%,#00fcff 72.50%,#00fdff 72.65%,#00fdff 72.80%,#00fcff 72.95%,#00fcff 73.11%,#00fbff 73.26%,#00fdff 73.41%,#00ffff 73.56%,#00fcff 73.71%,#00fbff 73.86%,#00fbff 74.02%,#00ffea 74.17%,#00ff34 74.32%,#5dff00 74.47%,#93ff00 74.62%,#afff00 74.78%,#90ff00 74.93%,#57ff00 75.08%,#00ff39 75.23%,#00ffed 75.38%,#00f9ff 75.54%,#00faff 75.69%,#00f8ff 75.84%,#00f7ff 75.99%,#00f8ff 76.14%,#00f8ff 76.29%,#00f9ff 76.45%,#00f8ff 76.60%,#00f8ff 76.75%,#00f7ff 76.90%,#00f7ff 77.05%,#00f4ff 77.21%,#00f2ff 77.36%,#00f4ff 77.51%,#00f3ff 77.66%,#00f5ff 77.81%,#00f6ff 77.97%,#00f5ff 78.12%,#00f4ff 78.27%,#00f3ff 78.42%,#00f2ff 78.57%,#00f2ff 78.72%,#00f0ff 78.88%,#00f0ff 79.03%,#00efff 79.18%,#00f0ff 79.33%,#00f1ff 79.48%,#00f4ff 79.64%,#00f5ff 79.79%,#00f4ff 79.94%,#00f4ff 80.09%,#00f8ff 80.24%,#00fbff 80.39%,#00faff 80.55%,#00f6ff 80.70%,#00f5ff 80.85%,#00f7ff 81.00%,#00f9ff 81.15%,#00faff 81.31%,#00f9ff 81.46%,#00f8ff 81.61%,#00f9ff 81.76%,#00f9ff 81.91%,#00f8ff 82.07%,#00f7ff 82.22%,#00f4ff 82.37%,#00f7ff 82.52%,#00f7ff 82.67%,#00f6ff 82.82%,#00f4ff 82.98%,#00f1ff 83.13%,#00eeff 83.28%,#00ebff 83.43%,#00eaff 83.58%,#00eaff 83.74%,#00ebff 83.89%,#00ecff 84.04%,#00ecff 84.19%,#00ecff 84.34%,#00f1ff 84.50%,#00eeff 84.65%,#00edff 84.80%,#00efff 84.95%,#00f1ff 85.10%,#00f3ff 85.25%,#00f5ff 85.41%,#00f2ff 85.56%,#00f5ff 85.71%,#00f7ff 85.86%,#00f5ff 86.01%,#00f3ff 86.17%,#00f4ff 86.32%,#00f5ff 86.47%,#00f8ff 86.62%,#00f8ff 86.77%,#00f5ff 86.92%,#00f5ff 87.08%,#00f6ff 87.23%,#00f6ff 87.38%,#00f4ff 87.53%,#00f1ff 87.68%,#00f1ff 87.84%,#00f3ff 87.99%,#00f4ff 88.14%,#00f4ff 88.29%,#00f2ff 88.44%,#00f3ff 88.60%,#00f3ff 88.75%,#00f5ff 88.90%,#00f8ff 89.05%,#00faff 89.20%,#00fbff 89.35%,#00feff 89.51%,#00fdff 89.66%,#00fdff 89.81%,#00faff 89.96%,#00f7ff 90.11%,#00f8ff 90.27%,#00f8ff 90.42%,#00f6ff 90.57%,#00faff 90.72%,#00faff 90.87%,#00fbff 91.03%,#00faff 91.18%,#00f5ff 91.33%,#00f5ff 91.48%,#00f7ff 91.63%,#00f6ff 91.78%,#00f5ff 91.94%,#00f4ff 92.09%,#00f4ff 92.24%,#00f6ff 92.39%,#00f6ff 92.54%,#00f4ff 92.70%,#00f4ff 92.85%,#00f6ff 93.00%,#00f8ff 93.15%,#00f9ff 93.30%,#00fbff 93.45%,#00fdff 93.61%,#00ffff 93.76%,#00fdff 93.91%,#00fbff 94.06%,#00faff 94.21%,#00fbff 94.37%,#00fffa 94.52%,#00fffa 94.67%,#00fffb 94.82%,#00fffc 94.97%,#00fffa 95.13%,#00fffa 95.28%,#00fffb 95.43%,#00fffd 95.58%,#00fffd 95.73%,#00fffd 95.88%,#00fffb 96.04%,#00fffb 96.19%,#00fffb 96.34%,#00fffd 96.49%,#00fffd 96.64%,#00fffb 96.80%,#00fff9 96.95%,#00fffc 97.10%,#00fffe 97.25%,#00ffff 97.40%,#00fffe 97.56%,#00feff 97.71%,#00fdff 97.86%,#00fcff 98.01%,#00fcff 98.16%,#00fdff 98.31%,#00ffff 98.47%,#00fffc 98.62%,#00fffa 98.77%,#00fff7 98.92%,#00fff7 99.07%,#00fff6 99.23%,#00fff5 99.38%,#00fff8 99.53%,#00fff9 99.68%,#00fff9 99.83%,#00fff9 99.98%);"></div>
<svg style="left:711px;top:541.8px;mix-blend-mode:multiply" width="658.2" height="190.2"><filter id="nz" x="0" y="0" width="100%" height="100%"><feTurbulence type="fractalNoise" baseFrequency="0.75 0.7" numOctaves="2" seed="4"/><feColorMatrix values="0 0 0 0 0.7  0 0 0 0 0.74  0 0 0 0 1  0 0 0 .9 -.35"/></filter><rect width="100%" height="100%" filter="url(#nz)"/></svg>
<div class="a" style="left:709.1px;top:539.3px;width:662.9px;height:194.4px;border:1.2px solid #ececec;"></div>
<div class="a" style="left:705.6px;top:542.1px;width:3.8px;height:1.0px;background:#e0e0e0;"></div>
<div class="t" style="right:809.6px;top:536px;font-size:13.2px;line-height:15px;color:#e6e6e6;">0</div>
<div class="a" style="left:705.6px;top:583.3px;width:3.8px;height:1.0px;background:#e0e0e0;"></div>
<div class="t" style="right:809.6px;top:577px;font-size:13.2px;line-height:15px;color:#e6e6e6;">-0.5</div>
<div class="a" style="left:705.6px;top:624.5px;width:3.8px;height:1.0px;background:#e0e0e0;"></div>
<div class="t" style="right:809.6px;top:618px;font-size:13.2px;line-height:15px;color:#e6e6e6;">-1</div>
<div class="a" style="left:705.6px;top:665.6px;width:3.8px;height:1.0px;background:#e0e0e0;"></div>
<div class="t" style="right:809.6px;top:659px;font-size:13.2px;line-height:15px;color:#e6e6e6;">-1.5</div>
<div class="a" style="left:705.6px;top:706.7px;width:3.8px;height:1.0px;background:#e0e0e0;"></div>
<div class="t" style="right:809.6px;top:700px;font-size:13.2px;line-height:15px;color:#e6e6e6;">-2</div>
<div class="a" style="left:748.0px;top:733.2px;width:1.0px;height:4.2px;background:#e0e0e0;"></div>
<div class="t" style="left:598.5px;width:300px;text-align:center;top:741px;font-size:13.2px;line-height:15px;color:#e6e6e6;">80</div>
<div class="a" style="left:912.4px;top:733.2px;width:1.0px;height:4.2px;background:#e0e0e0;"></div>
<div class="t" style="left:762.9px;width:300px;text-align:center;top:741px;font-size:13.2px;line-height:15px;color:#e6e6e6;">90</div>
<div class="a" style="left:1076.8px;top:733.2px;width:1.0px;height:4.2px;background:#e0e0e0;"></div>
<div class="t" style="left:927.3px;width:300px;text-align:center;top:741px;font-size:13.2px;line-height:15px;color:#e6e6e6;">100</div>
<div class="a" style="left:1241.2px;top:733.2px;width:1.0px;height:4.2px;background:#e0e0e0;"></div>
<div class="t" style="left:1091.7px;width:300px;text-align:center;top:741px;font-size:13.2px;line-height:15px;color:#e6e6e6;">110</div>
<div class="t" style="left:890.0px;width:300px;text-align:center;top:753px;font-size:13.2px;line-height:15px;color:#f0f0f0;">Frequency / MHz</div>
<div class="t" style="left:1371.5px;top:615px;font-size:13px;line-height:15px;color:#f0f0f0;letter-spacing:0px;transform-origin:0 0;transform:translate(16px,0) rotate(90deg);">Time / s</div>
<div class="a" style="left:1392.1px;top:237.8px;width:1.0px;height:531.7px;background:#f4f4f4;"></div>
<div class="a" style="left:654.5px;top:775.0px;width:737.8px;height:30.0px;background:#4d4d4d;border-top:1px solid #8a8a8a;"></div>
<div class="a" style="left:866.8px;top:775.5px;width:1.2px;height:29.5px;background:#9a9a9a;"></div>
<div class="a" style="left:1021.4px;top:775.5px;width:1.2px;height:29.5px;background:#9a9a9a;"></div>
<div class="a" style="left:1144.3px;top:775.5px;width:1.2px;height:29.5px;background:#9a9a9a;"></div>
<div class="a" style="left:1268.2px;top:775.5px;width:1.2px;height:29.5px;background:#9a9a9a;"></div>
<div class="a" style="left:1391.4px;top:775.5px;width:1.2px;height:29.5px;background:#9a9a9a;"></div>
<div class="t" style="left:658.0px;top:777px;font-size:11px;line-height:12px;color:#fff;font-weight:700;letter-spacing:-0.8px;">RL</div>
<div class="t" style="left:674.5px;top:777px;font-size:11px;line-height:12px;color:#fff;font-weight:700;">Att.</div>
<div class="t" style="left:699.5px;top:777px;font-size:11px;line-height:12px;color:#fff;font-weight:700;letter-spacing:-0.3px;">Of.</div>
<div class="a" style="left:671.6px;top:778.0px;width:1.2px;height:12.0px;background:#9fb4d8;"></div>
<div class="a" style="left:696.6px;top:778.0px;width:1.2px;height:12.0px;background:#9fb4d8;"></div>
<div class="t" style="left:658.0px;top:791px;font-size:11px;line-height:12px;color:#fff;font-weight:700;letter-spacing:0.15px;">Input</div>
<div class="t" style="right:646.8px;top:777px;font-size:10.6px;line-height:12px;color:#e2e2e2;letter-spacing:-0.12px;">-13.5 dBm| 0 dB | Off</div>
<div class="t" style="right:646.8px;top:791px;font-size:10.6px;line-height:12px;color:#e2e2e2;letter-spacing:-0.12px;">1</div>
<div class="t" style="left:870.5px;top:777px;font-size:11px;line-height:12px;color:#fff;font-weight:700;letter-spacing:-0.3px;">Fcent</div>
<div class="t" style="left:870.5px;top:791px;font-size:11px;line-height:12px;color:#fff;font-weight:700;letter-spacing:-0.3px;">Fspan</div>
<div class="t" style="right:492.4px;top:777px;font-size:10.6px;line-height:12px;color:#e2e2e2;letter-spacing:-0.12px;">97.757 357 MHz</div>
<div class="t" style="right:492.4px;top:791px;font-size:10.6px;line-height:12px;color:#e2e2e2;letter-spacing:-0.12px;">40 MHz</div>
<div class="t" style="left:1025.4px;top:777px;font-size:11px;line-height:12px;color:#fff;font-weight:700;letter-spacing:-0.3px;">RBW</div>
<div class="t" style="right:369.4px;top:777px;font-size:10.6px;line-height:12px;color:#e2e2e2;letter-spacing:-0.12px;">100 kHz</div>
<div class="t" style="left:1148.6px;top:777px;font-size:11px;line-height:12px;color:#fff;font-weight:700;letter-spacing:-0.3px;">Meas. Time</div>
<div class="t" style="right:245.6px;top:777px;font-size:10.6px;line-height:12px;color:#e2e2e2;letter-spacing:-0.12px;">10 ms</div>
<div class="t" style="left:1272.2px;top:777px;font-size:11px;line-height:12px;color:#fff;font-weight:700;letter-spacing:-0.3px;">Scan No.</div>
<div class="t" style="left:1272.2px;top:791px;font-size:11px;line-height:12px;color:#fff;font-weight:700;letter-spacing:-0.3px;">Scan Count</div>
<div class="t" style="right:121.8px;top:777px;font-size:10.6px;line-height:12px;color:#e2e2e2;letter-spacing:-0.12px;">1 810</div>
<div class="t" style="right:121.8px;top:791px;font-size:10.6px;line-height:12px;color:#e2e2e2;letter-spacing:-0.12px;">50</div>
<div class="a" style="left:651.0px;top:232.0px;width:746.2px;height:541.0px;border:4.2px solid #c00000;border-radius:3px;"></div>
<div class="a" style="left:764px;top:325.8px;width:36.2px;height:36.2px;border-radius:50%;background:#fff;border:1.6px solid #b40000;box-shadow:1px 1.5px 3px rgba(0,0,0,.6);"></div>
<div class="a" style="left:769.9px;top:594.6px;width:36px;height:35.6px;border-radius:50%;background:#fff;border:1.6px solid #a80000;box-shadow:1px 2px 4px rgba(0,0,0,.55);"></div>
</body></html>
